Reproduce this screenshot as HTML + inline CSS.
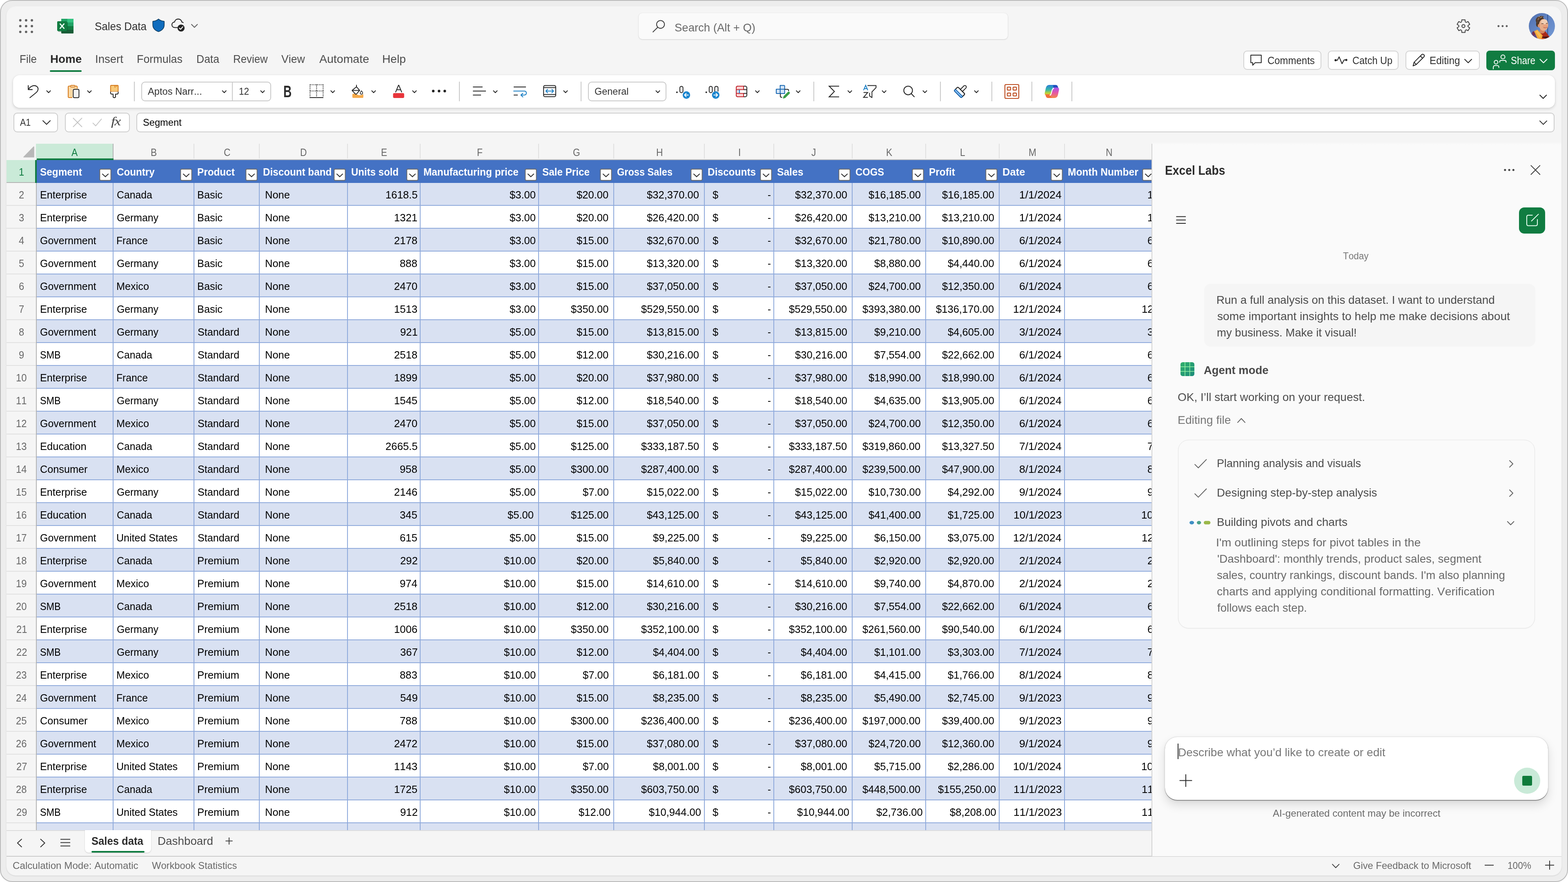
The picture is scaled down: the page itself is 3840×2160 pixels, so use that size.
<!DOCTYPE html>
<html lang="en"><head><meta charset="utf-8"><title>Sales Data - Excel</title>
<style>
html,body{margin:0;padding:0;background:#fff}
body{width:3840px;height:2160px;position:relative;overflow:hidden;font-family:"Liberation Sans",sans-serif;font-kerning:none;font-variant-ligatures:none}
.a{position:absolute}
.t{position:absolute;white-space:nowrap;line-height:1;transform-origin:0 50%}
.fb{width:26px;height:26.2px;background:#fff;border:1.5px solid #6c6c6c;border-radius:3.5px}
svg{overflow:visible}
@media (max-width:1920px) and (min-resolution:1.5dppx){body{zoom:.5}}
@media (max-width:1280px) and (min-resolution:2.5dppx){body{zoom:.333333}}
</style></head><body>
<div class="a" style="left:0px;top:0px;width:3836px;height:2156px;background:#ededed;border:2px solid #bababa;border-radius:30px;"></div>
<div class="a" style="left:16px;top:16px;width:3808px;height:2128px;background:#f5f5f5;border-radius:22px;box-shadow:0 1px 3px rgba(0,0,0,.16),0 0 0 1px rgba(255,255,255,.5);"></div>
<div class="a" style="left:0;top:0;width:3840px;height:2160px;clip-path:inset(16px 16px 16px 16px round 22px);will-change:transform">
<div class="a" style="left:1564px;top:32px;width:904px;height:64px;background:#fafafa;border-radius:9px;box-shadow:0 1px 3px rgba(0,0,0,.14),0 0 2px rgba(0,0,0,.10);"></div>
<svg class="a" style="left:0;top:0;" width="3840" height="2160" viewBox="0 0 3840 2160"><circle cx="49.7" cy="49.7" r="2.95" fill="#616161"/><circle cx="63.9" cy="49.7" r="2.95" fill="#616161"/><circle cx="78.1" cy="49.7" r="2.95" fill="#616161"/><circle cx="49.7" cy="63.9" r="2.95" fill="#616161"/><circle cx="63.9" cy="63.9" r="2.95" fill="#616161"/><circle cx="78.1" cy="63.9" r="2.95" fill="#616161"/><circle cx="49.7" cy="78.1" r="2.95" fill="#616161"/><circle cx="63.9" cy="78.1" r="2.95" fill="#616161"/><circle cx="78.1" cy="78.1" r="2.95" fill="#616161"/><g><rect x="150" y="46" width="30" height="36" rx="2" fill="#185c37"/><rect x="150" y="46" width="30" height="9" fill="#21a366"/><rect x="165" y="46" width="15" height="9" fill="#33c481"/><rect x="150" y="55" width="15" height="9" fill="#107c41"/><rect x="165" y="55" width="15" height="9" fill="#21a366"/><rect x="150" y="64" width="30" height="9" fill="#107c41"/><path d="M150 73 H180 V80 Q180 82 178 82 H152 Q150 82 150 80 Z" fill="#185c37"/><path d="M152 46 H178 Q180 46 180 48 V55 H150 V48 Q150 46 152 46Z" fill="#21a366"/><path d="M165 46 H178 Q180 46 180 48 V55 H165Z" fill="#33c481"/><rect x="142" y="54" width="24" height="24" rx="2" fill="#0b5a2e" opacity=".45"/><rect x="140" y="52" width="24" height="24" rx="2.2" fill="#107c41"/><path d="M146.6 57.6 L157.4 70.4 M157.4 57.6 L146.6 70.4" stroke="#f2fff8" stroke-width="2.7" fill="none"/></g><path d="M388.2 46.6 C392.5 50.2 397.2 51.8 401.6 52 L402.2 52.6 V60.5 C402.2 68.8 397.2 74.6 388.2 77.4 C379.2 74.6 374.2 68.8 374.2 60.5 V52.6 L374.8 52 C379.2 51.8 383.9 50.2 388.2 46.6Z" fill="#0f6cbd" stroke="#0c3b5e" stroke-width="1.6" stroke-linejoin="round"/><path d="M438 67.5 H428.5 C423.8 67.5 421 64.4 421 60.6 C421 57 423.7 54.2 427.4 53.9 C428.3 49.4 432 46.6 436.4 46.6 C441 46.6 444.6 49.6 445.4 54 C446.6 54.2 447.7 54.6 448.6 55.3" fill="none" stroke="#242424" stroke-width="2.1" stroke-linecap="round"/><circle cx="443.4" cy="68.6" r="8.7" fill="#242424"/><polyline points="439.4,68.9 442.3,71.8 447.6,65.6" fill="none" stroke="#fff" stroke-width="2.2" stroke-linecap="round" stroke-linejoin="round"/><polyline points="469,59.8 476.2,67 483.4,59.8" fill="none" stroke="#616161" stroke-width="2.1" stroke-linecap="round" stroke-linejoin="round"/><circle cx="1617.6" cy="59.8" r="9.6" fill="none" stroke="#424242" stroke-width="2.1"/><path d="M1610.8 66.8 L1599.2 78.3" stroke="#424242" stroke-width="2.1" stroke-linecap="round"/><path d="M3579.89 48.41 L3587.91 48.41 L3588.20 52.70 Q3589.00 55.07 3591.45 54.57L3595.31 52.69 L3599.32 59.62 L3595.75 62.02 Q3594.10 63.90 3595.75 65.78L3599.32 68.18 L3595.31 75.11 L3591.45 73.23 Q3589.00 72.73 3588.20 75.10L3587.91 79.39 L3579.89 79.39 L3579.60 75.10 Q3578.80 72.73 3576.35 73.23L3572.49 75.11 L3568.48 68.18 L3572.05 65.78 Q3573.70 63.90 3572.05 62.02L3568.48 59.62 L3572.49 52.69 L3576.35 54.57 Q3578.80 55.07 3579.60 52.70Z" fill="none" stroke="#424242" stroke-width="2" stroke-linejoin="round"/><circle cx="3583.9" cy="63.9" r="3.7" fill="none" stroke="#424242" stroke-width="2.1"/><circle cx="3669.8" cy="64" r="2.45" fill="#5c5c5c"/><circle cx="3679.8" cy="64" r="2.45" fill="#5c5c5c"/><circle cx="3689.9" cy="64" r="2.45" fill="#5c5c5c"/></svg>
<span class="t" style="left:232px;top:50px;font-size:28.5px;color:#303030;transform:scaleX(0.9108);">Sales Data</span>
<span class="t" style="left:1652px;top:54px;font-size:28px;color:#696969;transform:scaleX(0.9824);">Search (Alt + Q)</span>
<svg class="a" style="left:3744px;top:32px" width="64" height="64" viewBox="0 0 64 64"><defs><clipPath id="avc"><circle cx="32" cy="32" r="32"/></clipPath><linearGradient id="avbg" x1="0" y1="0" x2="1" y2="1"><stop offset="0" stop-color="#4f6fae"/><stop offset=".5" stop-color="#6487c6"/><stop offset="1" stop-color="#7399d4"/></linearGradient><filter id="avb" x="-10%" y="-10%" width="120%" height="120%"><feGaussianBlur stdDeviation="0.7"/></filter></defs><g clip-path="url(#avc)"><rect width="64" height="64" fill="url(#avbg)"/><g filter="url(#avb)"><rect x="45.4" y="0" width="1.7" height="60" fill="#2f4f8c"/><path d="M4 52 L13 45 L24 66 L2 66Z" fill="#5b4a8a"/><path d="M8 47 L12 44 L16 52 L11 56Z" fill="#7a2f4a"/><path d="M27 50 L41 45 L52 60 L46 70 L20 70Z" fill="#a9291c"/><path d="M31 58 L47 57 L49 63 L44 68 L28 66Z" fill="#4c1612"/><path d="M30 60 L40 62 L38 66 L26 66Z" fill="#e2541c"/><path d="M13 44.5 L21 40.5 L34 55 L30 67 L23 66Z" fill="#f2a83a"/><path d="M16 45 L21 42.5 L30 54 L27 60Z" fill="#f7bd55"/><ellipse cx="33" cy="44" rx="6.5" ry="6" fill="#d58560"/><ellipse cx="27.5" cy="18" rx="10.5" ry="10" fill="#4b3626"/><ellipse cx="22" cy="27" rx="4.2" ry="7" fill="#4b3626"/><ellipse cx="36.2" cy="29" rx="11.3" ry="14.4" fill="#e6ad8a"/><ellipse cx="38" cy="21.5" rx="8" ry="6" fill="#f1ceb4"/><ellipse cx="40" cy="33" rx="6" ry="5" fill="#e9a07c"/><ellipse cx="24.5" cy="31" rx="2.6" ry="4" fill="#d9936e"/><path d="M20 12 Q28 4 38 9 Q32 10 27 15 Q23 20 23 28 Q17 22 20 12Z" fill="#5a4130"/><path d="M24 10 L27 8 M28 12 L32 9 M22 16 L25 13" stroke="#c9a57c" stroke-width="1.2" fill="none"/><path d="M31 26.4 Q33.5 25 36 26.4" stroke="#5a3a2c" stroke-width="1.3" fill="none"/><path d="M42 25.6 Q44 24.6 46 25.8" stroke="#5a3a2c" stroke-width="1.3" fill="none"/><path d="M36 35.4 Q41 38.6 45.4 34.6 Q41 36.2 36 35.4Z" fill="#fff" stroke="#b5543e" stroke-width=".8"/></g></g></svg>
<span class="t" style="left:48px;top:130px;font-size:28.5px;color:#4c4c4c;transform:scaleX(0.9121);">File</span>
<span class="t" style="left:123px;top:130px;font-size:28.5px;color:#2b2b2b;font-weight:700;transform:scaleX(0.9751);">Home</span>
<span class="t" style="left:233px;top:130px;font-size:28.5px;color:#4c4c4c;transform:scaleX(0.9673);">Insert</span>
<span class="t" style="left:335px;top:130px;font-size:28.5px;color:#4c4c4c;transform:scaleX(0.9428);">Formulas</span>
<span class="t" style="left:481px;top:130px;font-size:28.5px;color:#4c4c4c;transform:scaleX(0.9298);">Data</span>
<span class="t" style="left:571px;top:130px;font-size:28.5px;color:#4c4c4c;transform:scaleX(0.9059);">Review</span>
<span class="t" style="left:689px;top:130px;font-size:28.5px;color:#4c4c4c;transform:scaleX(0.9333);">View</span>
<span class="t" style="left:782px;top:130px;font-size:28.5px;color:#4c4c4c;">Automate</span>
<span class="t" style="left:936px;top:130px;font-size:28.5px;color:#4c4c4c;transform:scaleX(0.9877);">Help</span>
<div class="a" style="left:122px;top:172px;width:78px;height:4px;background:#107c41;border-radius:2px;"></div>
<div class="a" style="left:3044.8px;top:124.4px;width:191px;height:47px;background:#fff;border:2px solid #d3d3d3;border-radius:9px;box-sizing:border-box;"></div>
<div class="a" style="left:3252.4px;top:124.4px;width:172.8px;height:47px;background:#fff;border:2px solid #d3d3d3;border-radius:9px;box-sizing:border-box;"></div>
<div class="a" style="left:3442.4px;top:124.4px;width:181.4px;height:47px;background:#fff;border:2px solid #d3d3d3;border-radius:9px;box-sizing:border-box;"></div>
<div class="a" style="left:3640px;top:124px;width:168px;height:48px;background:#107c41;border-radius:8px;"></div>
<span class="t" style="left:3104px;top:136px;font-size:25px;color:#303030;transform:scaleX(0.9580);">Comments</span>
<span class="t" style="left:3312px;top:136px;font-size:25px;color:#303030;transform:scaleX(0.9422);">Catch Up</span>
<span class="t" style="left:3501px;top:136px;font-size:25px;color:#303030;transform:scaleX(0.9756);">Editing</span>
<span class="t" style="left:3700px;top:136px;font-size:25px;color:#fff;transform:scaleX(0.8997);">Share</span>
<svg class="a" style="left:0;top:0;" width="3840" height="2160" viewBox="0 0 3840 2160"><path d="M3063.2 135 H3088.8 V153.4 H3074 L3067.8 159.8 V153.4 H3063.2 Z" fill="none" stroke="#242424" stroke-width="2" stroke-linejoin="round"/><path d="M3271.6 147.4 H3275.4 L3279.4 139.2 L3286.6 156 L3291.6 146.8 H3296" fill="none" stroke="#242424" stroke-width="2" stroke-linejoin="round" stroke-linecap="round"/><circle cx="3270.8" cy="147.4" r="2.6" fill="#242424"/><circle cx="3297" cy="146.8" r="2.6" fill="#242424"/><path d="M3460.6 161.4 L3463 152.6 L3481.8 133.8 Q3484.4 131.6 3487 134 Q3489.4 136.6 3487.2 139.2 L3468.4 158 Z M3463.4 152.8 L3468.2 157.6 M3478.6 137.2 L3483.6 142.2" fill="none" stroke="#242424" stroke-width="2" stroke-linejoin="round"/><polyline points="3587,145.25 3595.5,153.75 3604,145.25" fill="none" stroke="#242424" stroke-width="2" stroke-linecap="round" stroke-linejoin="round"/><circle cx="3680.6" cy="139.4" r="4.9" fill="none" stroke="#fff" stroke-width="2"/><path d="M3672.8 152.6 V151.4 Q3672.8 148 3676.2 148 H3685 Q3688.4 148 3688.4 151.4 V152.6" fill="none" stroke="#fff" stroke-width="2" stroke-linecap="round"/><circle cx="3663.8" cy="152.2" r="4.5" fill="none" stroke="#fff" stroke-width="2"/><path d="M3657 168.6 Q3656.6 160.4 3660.6 160.4 H3667 Q3671 160.4 3670.6 165.4" fill="none" stroke="#fff" stroke-width="2" stroke-linecap="round"/><polyline points="3771.5,145.25 3780,153.75 3788.5,145.25" fill="none" stroke="#fff" stroke-width="2.2" stroke-linecap="round" stroke-linejoin="round"/></svg>
<div class="a" style="left:32px;top:184px;width:3776px;height:80px;background:#fff;border-radius:16px;box-shadow:0 3px 7px rgba(0,0,0,.14),0 0 2px rgba(0,0,0,.12);"></div>
<div class="a" style="left:346px;top:200px;width:318px;height:48px;background:#fff;border:2px solid #c9c9c9;border-radius:9px;box-sizing:border-box;"></div>
<div class="a" style="left:568.4px;top:201px;width:2px;height:46px;background:#c9c9c9;"></div>
<div class="a" style="left:1440px;top:200px;width:192px;height:48px;background:#fff;border:2px solid #c9c9c9;border-radius:9px;box-sizing:border-box;"></div>
<div class="a" style="left:328.2px;top:200px;width:2px;height:48px;background:#c8c8c8;"></div>
<div class="a" style="left:1124.2px;top:200px;width:2px;height:48px;background:#c8c8c8;"></div>
<div class="a" style="left:1422.2px;top:200px;width:2px;height:48px;background:#c8c8c8;"></div>
<div class="a" style="left:1992.4px;top:200px;width:2px;height:48px;background:#c8c8c8;"></div>
<div class="a" style="left:2302.2px;top:200px;width:2px;height:48px;background:#c8c8c8;"></div>
<div class="a" style="left:2428.2px;top:200px;width:2px;height:48px;background:#c8c8c8;"></div>
<div class="a" style="left:2526.2px;top:200px;width:2px;height:48px;background:#c8c8c8;"></div>
<div class="a" style="left:2624.2px;top:200px;width:2px;height:48px;background:#c8c8c8;"></div>
<span class="t" style="left:362px;top:212px;font-size:24.5px;color:#303030;transform:scaleX(0.9650);">Aptos Narr...</span>
<span class="t" style="left:585px;top:212px;font-size:24.5px;color:#303030;transform:scaleX(0.9191);">12</span>
<span class="t" style="left:1456px;top:212px;font-size:24.5px;color:#303030;transform:scaleX(0.9574);">General</span>
<span class="t" style="left:694px;top:204px;font-size:40px;color:#2b2b2b;font-weight:700;transform:scaleX(0.7010);">B</span>
<svg class="a" style="left:0;top:0;" width="3840" height="2160" viewBox="0 0 3840 2160"><polyline points="114.5,222.3 119,226.9 123.5,222.3" fill="none" stroke="#2e2e2e" stroke-width="2.15" stroke-linecap="round" stroke-linejoin="round"/><polyline points="214.5,222.3 219,226.9 223.5,222.3" fill="none" stroke="#2e2e2e" stroke-width="2.15" stroke-linecap="round" stroke-linejoin="round"/><polyline points="544.7,222.3 549.2,226.9 553.7,222.3" fill="none" stroke="#2e2e2e" stroke-width="2.15" stroke-linecap="round" stroke-linejoin="round"/><polyline points="638.5,222.3 643,226.9 647.5,222.3" fill="none" stroke="#2e2e2e" stroke-width="2.15" stroke-linecap="round" stroke-linejoin="round"/><polyline points="810.3,222.3 814.8,226.9 819.3,222.3" fill="none" stroke="#2e2e2e" stroke-width="2.15" stroke-linecap="round" stroke-linejoin="round"/><polyline points="910.5,222.3 915,226.9 919.5,222.3" fill="none" stroke="#2e2e2e" stroke-width="2.15" stroke-linecap="round" stroke-linejoin="round"/><polyline points="1010.5,222.3 1015,226.9 1019.5,222.3" fill="none" stroke="#2e2e2e" stroke-width="2.15" stroke-linecap="round" stroke-linejoin="round"/><polyline points="1208.5,222.3 1213,226.9 1217.5,222.3" fill="none" stroke="#2e2e2e" stroke-width="2.15" stroke-linecap="round" stroke-linejoin="round"/><polyline points="1380.5,222.3 1385,226.9 1389.5,222.3" fill="none" stroke="#2e2e2e" stroke-width="2.15" stroke-linecap="round" stroke-linejoin="round"/><polyline points="1606.5,222.3 1611,226.9 1615.5,222.3" fill="none" stroke="#2e2e2e" stroke-width="2.15" stroke-linecap="round" stroke-linejoin="round"/><polyline points="1850.3,222.3 1854.8,226.9 1859.3,222.3" fill="none" stroke="#2e2e2e" stroke-width="2.15" stroke-linecap="round" stroke-linejoin="round"/><polyline points="1950.3,222.3 1954.8,226.9 1959.3,222.3" fill="none" stroke="#2e2e2e" stroke-width="2.15" stroke-linecap="round" stroke-linejoin="round"/><polyline points="2076.7,222.3 2081.2,226.9 2085.7,222.3" fill="none" stroke="#2e2e2e" stroke-width="2.15" stroke-linecap="round" stroke-linejoin="round"/><polyline points="2160.7,222.3 2165.2,226.9 2169.7,222.3" fill="none" stroke="#2e2e2e" stroke-width="2.15" stroke-linecap="round" stroke-linejoin="round"/><polyline points="2260.5,222.3 2265,226.9 2269.5,222.3" fill="none" stroke="#2e2e2e" stroke-width="2.15" stroke-linecap="round" stroke-linejoin="round"/><polyline points="2386.7,222.3 2391.2,226.9 2395.7,222.3" fill="none" stroke="#2e2e2e" stroke-width="2.15" stroke-linecap="round" stroke-linejoin="round"/><polyline points="3771.2,233 3779.2,241 3787.2,233" fill="none" stroke="#242424" stroke-width="2.2" stroke-linecap="round" stroke-linejoin="round"/><path d="M69.2 209.6 V219.4 H79 M69.6 219 C74.6 210.6 84 207.2 90 211.6 C95.2 215.6 93.8 222.6 88 227.2 L73.2 239.2" fill="none" stroke="#242424" stroke-width="2.1" stroke-linecap="round" stroke-linejoin="round"/><path d="M177 239 H169.6 Q167 239 167 236.4 V213.4 Q167 210.8 169.6 210.8 H171.6 M184.6 210.8 H186.6 Q189.2 210.8 189.2 213.4 V217" fill="#fbd9a4" stroke="#d4791c" stroke-width="2"/><path d="M168 212 H188.2 V218 H178 V238 H168Z" fill="#fbd9a4"/><rect x="172.6" y="209" width="11.2" height="4.2" rx="2.1" fill="#fde8c8" stroke="#d4791c" stroke-width="1.8"/><rect x="179.4" y="218.8" width="14" height="20.4" rx="2.6" fill="#f3f3f3" stroke="#242424" stroke-width="2"/><rect x="270.8" y="209" width="18.6" height="15.4" rx="1.4" fill="#f8c978" stroke="#d4791c" stroke-width="2"/><path d="M281.6 209 V214.6 M285.6 209 V212.6" stroke="#d4791c" stroke-width="1.8"/><path d="M270.8 224.4 V227.6 Q270.8 230.6 273.8 230.6 H277 V236.4 Q277 239.2 280 239.2 Q283 239.2 283 236.4 V230.6 H286.4 Q289.4 230.6 289.4 227.6 V224.4" fill="#fff" stroke="#242424" stroke-width="2" stroke-linejoin="round"/><path d="M759 207.5 H791.6 M759 222.7 H791.6 M759.3 207.5 V236.4 M775.3 207.5 V236.4 M791.3 207.5 V236.4" stroke="#242424" stroke-width="2.1" stroke-dasharray="2.1 2.25" fill="none"/><path d="M758 239 H792" stroke="#242424" stroke-width="2"/><path d="M863 230.6 Q868 227.4 874.6 231.4 Q882 235.4 889.8 230.8 V237.2 Q889.8 239.8 887.2 239.8 H865.6 Q863 239.8 863 237.2Z" fill="#f5a94a"/><path d="M873 208.4 V213.4 M873 212.4 L880.8 221.4 L873 230.2 Q871.8 231.2 870.6 230.2 L862.2 221.6 Z M863 221.5 H880" fill="#fff" stroke="#242424" stroke-width="2" stroke-linejoin="round" stroke-linecap="round"/><path d="M885.2 222.6 Q888.2 226.2 888.2 227.8 A3 3 0 0 1 882.2 227.8 Q882.2 226.2 885.2 222.6Z" fill="#fff" stroke="#242424" stroke-width="1.6"/><rect x="962.6" y="228" width="27.2" height="12" rx="3" fill="#e8353b"/><path d="M969 225.4 L975.8 208.8 H976.8 L983.6 225.4 M971.4 219.8 H981.2" fill="none" stroke="#242424" stroke-width="2" stroke-linejoin="round" stroke-linecap="round"/><circle cx="1061" cy="223" r="3.2" fill="#242424"/><circle cx="1075.2" cy="223" r="3.2" fill="#242424"/><circle cx="1089.2" cy="223" r="3.2" fill="#242424"/><path d="M1158.2 213 H1181.8 M1158.2 222.9 H1190 M1158.2 232.8 H1178" stroke="#242424" stroke-width="2" fill="none"/><path d="M1258 213 H1288 M1258 232.8 H1268" stroke="#242424" stroke-width="2" fill="none"/><path d="M1258 222.9 H1283.4 Q1289 222.9 1289 227.8 Q1289 232.8 1283.4 232.8 H1276 M1280.6 228.2 L1275.6 232.8 L1280.6 237.4" stroke="#1b7fc4" stroke-width="2" fill="none" stroke-linecap="round" stroke-linejoin="round"/><rect x="1331.2" y="209.4" width="29.8" height="27.4" rx="3.6" fill="#fff" stroke="#242424" stroke-width="2"/><path d="M1331.2 214.4 H1361 M1331.2 231.6 H1361" stroke="#242424" stroke-width="2"/><path d="M1337 223 H1355.4 M1341 218.8 L1336.8 223 L1341 227.2 M1351.4 218.8 L1355.6 223 L1351.4 227.2" stroke="#1b7fc4" stroke-width="2" fill="none" stroke-linecap="round" stroke-linejoin="round"/><circle cx="1657.8" cy="226" r="2" fill="#242424"/><rect x="1665" y="211.4" width="7.6" height="15.6" rx="3.8" fill="none" stroke="#242424" stroke-width="2"/><circle cx="1681" cy="232.8" r="9.2" fill="#1b86cf"/><path d="M1685.6 232.8 H1676.6 M1680.4 228.8 L1676.4 232.8 L1680.4 236.8" stroke="#fff" stroke-width="2" fill="none" stroke-linecap="round" stroke-linejoin="round"/><circle cx="1729.6" cy="226" r="2" fill="#242424"/><rect x="1736.8" y="211.4" width="7.6" height="15.6" rx="3.8" fill="none" stroke="#242424" stroke-width="2"/><path d="M1750.4 224 V215.2 Q1750.4 211.4 1754.4 211.4 Q1758.4 211.4 1758.4 215.2 V224" fill="none" stroke="#242424" stroke-width="2"/><circle cx="1752.8" cy="232.8" r="9.2" fill="#1b86cf"/><path d="M1748.2 232.8 H1757.2 M1753.4 228.8 L1757.4 232.8 L1753.4 236.8" stroke="#fff" stroke-width="2" fill="none" stroke-linecap="round" stroke-linejoin="round"/><rect x="1803" y="211" width="26" height="26" rx="4" fill="#fff" stroke="#242424" stroke-width="2"/><path d="M1807 211 H1821 V219 H1803 V215 Q1803 211 1807 211Z" fill="#fbd3d3"/><path d="M1803 229 H1821 V237 H1807 Q1803 237 1803 233Z" fill="#fbd3d3"/><rect x="1803.6" y="219.6" width="7" height="8.8" fill="#cfe0f5"/><path d="M1821 211 H1807 Q1803 211 1803 215 V233 Q1803 237 1807 237 H1821 M1803 219.4 H1821 M1803 228.8 H1821 M1821 211 V219.4 M1821 228.8 V237" fill="none" stroke="#c4262e" stroke-width="2"/><path d="M1811 219.6 V228.6" stroke="#1b6ec2" stroke-width="2"/><path d="M1821 219.4 H1829 M1821 228.8 H1829" stroke="#242424" stroke-width="2"/><path d="M1910.6 209.2 H1920 Q1921.6 209.2 1921.6 210.8 V218.6 H1910.6Z M1901 218.6 H1921.6 V229 H1902.6 Q1901 229 1901 227.4Z" fill="#d6e6f7" stroke="#1565b0" stroke-width="2" stroke-linejoin="round"/><path d="M1910.6 218.6 V229 M1910.6 210.8 Q1910.6 209.2 1912.2 209.2" fill="none" stroke="#1565b0" stroke-width="2"/><path d="M1921.6 218.8 H1928.6 Q1931.2 218.8 1931.2 221.4 V223 M1911 229.4 V235.6 Q1911 238.2 1913.6 238.2 H1915.6" fill="none" stroke="#242424" stroke-width="2"/><path d="M1917.2 241.6 L1918.8 235.8 L1929.6 225 Q1931.6 223.4 1933.6 225.4 Q1935.4 227.4 1933.8 229.2 L1923 240 Z" fill="#3a9d47"/><path d="M2055 211 H2030.6 L2043.4 224 L2030.6 237.2 H2055" fill="none" stroke="#242424" stroke-width="2.1" stroke-linejoin="miter"/><path d="M2114.8 221 L2120 208.8 L2125.2 221 M2116.6 217 H2123.4" fill="none" stroke="#1b7fc4" stroke-width="2"/><path d="M2114.8 226.6 H2125 L2114.8 238.6 H2125.4" fill="none" stroke="#242424" stroke-width="2" stroke-linejoin="miter"/><path d="M2124.4 209.4 H2145.4 V214.6 L2135.4 225 V239 L2129.6 235.2 V227.4" fill="none" stroke="#242424" stroke-width="2" stroke-linejoin="round"/><circle cx="2224" cy="221.6" r="10.6" fill="none" stroke="#242424" stroke-width="2.1"/><path d="M2231.6 229.2 L2239 237" stroke="#242424" stroke-width="2.1" stroke-linecap="round"/><g transform="translate(2351.6 224.4) rotate(45)"><rect x="-3.6" y="-19.6" width="7.2" height="18" rx="3.6" fill="#fff" stroke="#242424" stroke-width="2"/><rect x="-12.4" y="-4" width="24.8" height="13" rx="2.6" fill="#fff" stroke="#242424" stroke-width="2"/><path d="M-12.4 4.2 H12.4 V6.4 Q12.4 9 9.8 9 H-9.8 Q-12.4 9 -12.4 6.4Z" fill="#8cc1f5" stroke="#1565b0" stroke-width="2" stroke-linejoin="round"/><path d="M-12.4 4.2 V-1.4 Q-12.4 -4 -9.8 -4 H9.8 Q12.4 -4 12.4 -1.4 V4.2" fill="none" stroke="#242424" stroke-width="2"/></g><rect x="2461" y="207" width="34" height="34" rx="2.6" fill="none" stroke="#bc4b1e" stroke-width="2.2"/><rect x="2466.8" y="213.4" width="8.2" height="7.2" rx="1.4" fill="none" stroke="#bc4b1e" stroke-width="2.2"/><rect x="2466.8" y="227.8" width="8.2" height="7.2" rx="1.4" fill="none" stroke="#bc4b1e" stroke-width="2.2"/><rect x="2481" y="213.4" width="8.2" height="7.2" rx="1.4" fill="none" stroke="#bc4b1e" stroke-width="2.2"/><rect x="2481" y="227.8" width="8.2" height="7.2" rx="1.4" fill="none" stroke="#bc4b1e" stroke-width="2.2"/><defs><linearGradient id="cpa" x1="0" y1="0" x2="0" y2="1"><stop offset="0" stop-color="#2a7ed8"/><stop offset=".45" stop-color="#37b7a8"/><stop offset=".75" stop-color="#b6d23c"/><stop offset="1" stop-color="#f3b72f"/></linearGradient><linearGradient id="cpb" x1="0" y1="0" x2="0" y2="1"><stop offset="0" stop-color="#a855f0"/><stop offset=".5" stop-color="#e456a6"/><stop offset="1" stop-color="#f58a4a"/></linearGradient><linearGradient id="cpc" x1="0" y1="0" x2="1" y2="1"><stop offset="0" stop-color="#1b5fd0"/><stop offset="1" stop-color="#2a44a8"/></linearGradient></defs><path d="M2571 208 H2585 Q2589.6 208 2590.8 212.4 L2592.4 218 H2580.4 L2578.4 211.4 Q2577.4 208 2571 208Z" fill="url(#cpc)"/><path d="M2569.8 208 H2576 Q2580.4 208 2579.2 212.6 L2574.6 229.6 Q2573.4 234 2569 234 H2563.6 Q2557.6 234 2558.6 227.6 L2561.2 215.6 Q2562.8 208 2569.8 208Z" fill="url(#cpa)"/><path d="M2583 214.2 H2588.6 Q2594.6 214.2 2593.4 220.6 L2590.8 232.6 Q2589.2 240 2582.2 240 H2576 Q2571.6 240 2572.8 235.6 L2577.4 218.6 Q2578.6 214.2 2583 214.2Z" fill="url(#cpb)"/><path d="M2581 240 H2567 Q2562.4 240 2561.2 235.6 L2560 231 H2572 L2573.6 236.6 Q2574.6 240 2581 240Z" fill="#f0703a"/><path d="M2580.4 216.4 Q2577.6 217.4 2576.6 221 L2574.2 229.8 Q2573.4 232.2 2571.4 233" fill="none" stroke="#fff" stroke-width="2.2" stroke-linecap="round"/></svg>
<div class="a" style="left:32.5px;top:276px;width:109px;height:48px;background:#fff;border:2px solid #cdcdcd;border-radius:9px;box-sizing:border-box;"></div>
<div class="a" style="left:158.8px;top:276px;width:158.8px;height:48px;background:#fff;border:2px solid #cdcdcd;border-radius:9px;box-sizing:border-box;"></div>
<div class="a" style="left:334.4px;top:276px;width:3473px;height:48px;background:#fff;border:2px solid #cdcdcd;border-radius:9px;box-sizing:border-box;"></div>
<span class="t" style="left:49px;top:288px;font-size:24.5px;color:#303030;transform:scaleX(0.8773);">A1</span>
<span class="t" style="left:350px;top:288px;font-size:24.5px;color:#000;transform:scaleX(0.9652);">Segment</span>
<svg class="a" style="left:0;top:0;" width="3840" height="2160" viewBox="0 0 3840 2160"><polyline points="105,295.5 114,304.5 123,295.5" fill="none" stroke="#242424" stroke-width="2" stroke-linecap="round" stroke-linejoin="round"/><polyline points="3771,296.15 3779.5,304.65 3788,296.15" fill="none" stroke="#242424" stroke-width="2" stroke-linecap="round" stroke-linejoin="round"/><path d="M179.4 289.4 L200.4 310.4 M200.4 289.4 L179.4 310.4" stroke="#c0c0c0" stroke-width="2" stroke-linecap="round"/><polyline points="227.6,301.4 234.4,308.2 248.4,291.6" fill="none" stroke="#c6c6c6" stroke-width="2" stroke-linecap="round" stroke-linejoin="round"/></svg>
<span class="t" style="left:271.6px;top:283.4px;font-size:29.5px;font-family:'Liberation Serif',serif;font-style:italic;color:#424242;letter-spacing:-1.5px;transform:scaleX(1.22)">fx</span>
<div class="a" style="left:0;top:0;width:3840px;height:2160px;clip-path:inset(350px 1020px 127px 16px)">
<div class="a" style="left:88px;top:392px;width:2732px;height:1700px;background:#fff;"></div>
<div class="a" style="left:16px;top:350px;width:2804px;height:42px;background:#f5f5f5;"></div>
<div class="a" style="left:16px;top:392px;width:72px;height:1700px;background:#f5f5f5;"></div>
<div class="a" style="left:88px;top:390px;width:2732px;height:2px;background:#c0c0c0;"></div>
<div class="a" style="left:88px;top:352px;width:190px;height:36px;background:#caead8;"></div>
<div class="a" style="left:276px;top:352px;width:2px;height:36px;background:#b3b3b3;"></div>
<div class="a" style="left:90px;top:388px;width:188px;height:4px;background:#107c41;"></div>
<span class="t" style="left:175px;top:361px;font-size:25.3px;color:#107c41;transform:scaleX(0.9000);">A</span>
<div class="a" style="left:474px;top:352px;width:2px;height:36px;background:#e0e0e0;"></div>
<span class="t" style="left:369px;top:361px;font-size:25.3px;color:#696969;transform:scaleX(0.9000);">B</span>
<div class="a" style="left:634px;top:352px;width:2px;height:36px;background:#e0e0e0;"></div>
<span class="t" style="left:548px;top:361px;font-size:25.3px;color:#696969;transform:scaleX(0.9000);">C</span>
<div class="a" style="left:850px;top:352px;width:2px;height:36px;background:#e0e0e0;"></div>
<span class="t" style="left:735px;top:361px;font-size:25.3px;color:#696969;transform:scaleX(0.9000);">D</span>
<div class="a" style="left:1028px;top:352px;width:2px;height:36px;background:#e0e0e0;"></div>
<span class="t" style="left:933px;top:361px;font-size:25.3px;color:#696969;transform:scaleX(0.9000);">E</span>
<div class="a" style="left:1318px;top:352px;width:2px;height:36px;background:#e0e0e0;"></div>
<span class="t" style="left:1168px;top:361px;font-size:25.3px;color:#696969;transform:scaleX(0.9000);">F</span>
<div class="a" style="left:1502px;top:352px;width:2px;height:36px;background:#e0e0e0;"></div>
<span class="t" style="left:1403px;top:361px;font-size:25.3px;color:#696969;transform:scaleX(0.9000);">G</span>
<div class="a" style="left:1724px;top:352px;width:2px;height:36px;background:#e0e0e0;"></div>
<span class="t" style="left:1607px;top:361px;font-size:25.3px;color:#696969;transform:scaleX(0.9000);">H</span>
<div class="a" style="left:1894px;top:352px;width:2px;height:36px;background:#e0e0e0;"></div>
<span class="t" style="left:1808px;top:361px;font-size:25.3px;color:#696969;transform:scaleX(0.9000);">I</span>
<div class="a" style="left:2086px;top:352px;width:2px;height:36px;background:#e0e0e0;"></div>
<span class="t" style="left:1987px;top:361px;font-size:25.3px;color:#696969;transform:scaleX(0.9000);">J</span>
<div class="a" style="left:2266px;top:352px;width:2px;height:36px;background:#e0e0e0;"></div>
<span class="t" style="left:2170px;top:361px;font-size:25.3px;color:#696969;transform:scaleX(0.9000);">K</span>
<div class="a" style="left:2446px;top:352px;width:2px;height:36px;background:#e0e0e0;"></div>
<span class="t" style="left:2351px;top:361px;font-size:25.3px;color:#696969;transform:scaleX(0.9000);">L</span>
<div class="a" style="left:2606px;top:352px;width:2px;height:36px;background:#e0e0e0;"></div>
<span class="t" style="left:2519px;top:361px;font-size:25.3px;color:#696969;transform:scaleX(0.9000);">M</span>
<span class="t" style="left:2708px;top:361px;font-size:25.3px;color:#696969;transform:scaleX(0.9000);">N</span>
<svg class="a" style="left:54px;top:356px" width="32" height="32" viewBox="54 356 32 32"><path d="M83.8 360.5 V385.6 H58.6 Q56 385.6 58 383.4 L81.6 359.2 Q83.8 357.2 83.8 360.5 Z" fill="#b8b8b8"/></svg>
<div class="a" style="left:16px;top:392px;width:72px;height:56px;background:#caead8;"></div>
<div class="a" style="left:16px;top:446px;width:70px;height:2px;background:#b3b3b3;"></div>
<div class="a" style="left:86px;top:392px;width:4px;height:56px;background:#107c41;"></div>
<div class="a" style="left:88px;top:448px;width:2px;height:1700px;background:#b3b3b3;"></div>
<span class="t" style="left:46px;top:409px;font-size:25.6px;color:#107c41;transform:scaleX(0.9300);">1</span>
<div class="a" style="left:16px;top:502px;width:72px;height:2px;background:#e1e1e1;"></div>
<span class="t" style="left:46px;top:465px;font-size:25.6px;color:#696969;transform:scaleX(0.9300);">2</span>
<div class="a" style="left:16px;top:558px;width:72px;height:2px;background:#e1e1e1;"></div>
<span class="t" style="left:46px;top:521px;font-size:25.6px;color:#696969;transform:scaleX(0.9300);">3</span>
<div class="a" style="left:16px;top:614px;width:72px;height:2px;background:#e1e1e1;"></div>
<span class="t" style="left:46px;top:577px;font-size:25.6px;color:#696969;transform:scaleX(0.9300);">4</span>
<div class="a" style="left:16px;top:670px;width:72px;height:2px;background:#e1e1e1;"></div>
<span class="t" style="left:46px;top:633px;font-size:25.6px;color:#696969;transform:scaleX(0.9300);">5</span>
<div class="a" style="left:16px;top:726px;width:72px;height:2px;background:#e1e1e1;"></div>
<span class="t" style="left:46px;top:689px;font-size:25.6px;color:#696969;transform:scaleX(0.9300);">6</span>
<div class="a" style="left:16px;top:782px;width:72px;height:2px;background:#e1e1e1;"></div>
<span class="t" style="left:46px;top:745px;font-size:25.6px;color:#696969;transform:scaleX(0.9300);">7</span>
<div class="a" style="left:16px;top:838px;width:72px;height:2px;background:#e1e1e1;"></div>
<span class="t" style="left:46px;top:801px;font-size:25.6px;color:#696969;transform:scaleX(0.9300);">8</span>
<div class="a" style="left:16px;top:894px;width:72px;height:2px;background:#e1e1e1;"></div>
<span class="t" style="left:46px;top:857px;font-size:25.6px;color:#696969;transform:scaleX(0.9300);">9</span>
<div class="a" style="left:16px;top:950px;width:72px;height:2px;background:#e1e1e1;"></div>
<span class="t" style="left:39px;top:913px;font-size:25.6px;color:#696969;transform:scaleX(0.9300);">10</span>
<div class="a" style="left:16px;top:1006px;width:72px;height:2px;background:#e1e1e1;"></div>
<span class="t" style="left:39px;top:969px;font-size:25.6px;color:#696969;transform:scaleX(0.9300);">11</span>
<div class="a" style="left:16px;top:1062px;width:72px;height:2px;background:#e1e1e1;"></div>
<span class="t" style="left:39px;top:1025px;font-size:25.6px;color:#696969;transform:scaleX(0.9300);">12</span>
<div class="a" style="left:16px;top:1118px;width:72px;height:2px;background:#e1e1e1;"></div>
<span class="t" style="left:39px;top:1081px;font-size:25.6px;color:#696969;transform:scaleX(0.9300);">13</span>
<div class="a" style="left:16px;top:1174px;width:72px;height:2px;background:#e1e1e1;"></div>
<span class="t" style="left:39px;top:1137px;font-size:25.6px;color:#696969;transform:scaleX(0.9300);">14</span>
<div class="a" style="left:16px;top:1230px;width:72px;height:2px;background:#e1e1e1;"></div>
<span class="t" style="left:39px;top:1193px;font-size:25.6px;color:#696969;transform:scaleX(0.9300);">15</span>
<div class="a" style="left:16px;top:1286px;width:72px;height:2px;background:#e1e1e1;"></div>
<span class="t" style="left:39px;top:1249px;font-size:25.6px;color:#696969;transform:scaleX(0.9300);">16</span>
<div class="a" style="left:16px;top:1342px;width:72px;height:2px;background:#e1e1e1;"></div>
<span class="t" style="left:39px;top:1305px;font-size:25.6px;color:#696969;transform:scaleX(0.9300);">17</span>
<div class="a" style="left:16px;top:1398px;width:72px;height:2px;background:#e1e1e1;"></div>
<span class="t" style="left:39px;top:1361px;font-size:25.6px;color:#696969;transform:scaleX(0.9300);">18</span>
<div class="a" style="left:16px;top:1454px;width:72px;height:2px;background:#e1e1e1;"></div>
<span class="t" style="left:39px;top:1417px;font-size:25.6px;color:#696969;transform:scaleX(0.9300);">19</span>
<div class="a" style="left:16px;top:1510px;width:72px;height:2px;background:#e1e1e1;"></div>
<span class="t" style="left:39px;top:1473px;font-size:25.6px;color:#696969;transform:scaleX(0.9300);">20</span>
<div class="a" style="left:16px;top:1566px;width:72px;height:2px;background:#e1e1e1;"></div>
<span class="t" style="left:40px;top:1529px;font-size:25.6px;color:#696969;transform:scaleX(0.9300);">21</span>
<div class="a" style="left:16px;top:1622px;width:72px;height:2px;background:#e1e1e1;"></div>
<span class="t" style="left:40px;top:1585px;font-size:25.6px;color:#696969;transform:scaleX(0.9300);">22</span>
<div class="a" style="left:16px;top:1678px;width:72px;height:2px;background:#e1e1e1;"></div>
<span class="t" style="left:39px;top:1641px;font-size:25.6px;color:#696969;transform:scaleX(0.9300);">23</span>
<div class="a" style="left:16px;top:1734px;width:72px;height:2px;background:#e1e1e1;"></div>
<span class="t" style="left:39px;top:1697px;font-size:25.6px;color:#696969;transform:scaleX(0.9300);">24</span>
<div class="a" style="left:16px;top:1790px;width:72px;height:2px;background:#e1e1e1;"></div>
<span class="t" style="left:39px;top:1753px;font-size:25.6px;color:#696969;transform:scaleX(0.9300);">25</span>
<div class="a" style="left:16px;top:1846px;width:72px;height:2px;background:#e1e1e1;"></div>
<span class="t" style="left:39px;top:1809px;font-size:25.6px;color:#696969;transform:scaleX(0.9300);">26</span>
<div class="a" style="left:16px;top:1902px;width:72px;height:2px;background:#e1e1e1;"></div>
<span class="t" style="left:40px;top:1865px;font-size:25.6px;color:#696969;transform:scaleX(0.9300);">27</span>
<div class="a" style="left:16px;top:1958px;width:72px;height:2px;background:#e1e1e1;"></div>
<span class="t" style="left:39px;top:1921px;font-size:25.6px;color:#696969;transform:scaleX(0.9300);">28</span>
<div class="a" style="left:16px;top:2014px;width:72px;height:2px;background:#e1e1e1;"></div>
<span class="t" style="left:40px;top:1977px;font-size:25.6px;color:#696969;transform:scaleX(0.9300);">29</span>
<div class="a" style="left:16px;top:2070px;width:72px;height:2px;background:#e1e1e1;"></div>
<div class="a" style="left:90px;top:392px;width:2730px;height:56px;background:#4472c4;"></div>
<span class="t" style="left:98px;top:408px;font-size:26px;color:#fff;font-weight:700;transform:scaleX(0.9362);">Segment</span>
<span class="t" style="left:286px;top:408px;font-size:26px;color:#fff;font-weight:700;transform:scaleX(0.9294);">Country</span>
<span class="t" style="left:483px;top:408px;font-size:26px;color:#fff;font-weight:700;transform:scaleX(0.9348);">Product</span>
<span class="t" style="left:644px;top:408px;font-size:26px;color:#fff;font-weight:700;transform:scaleX(0.9317);">Discount band</span>
<span class="t" style="left:860px;top:408px;font-size:26px;color:#fff;font-weight:700;transform:scaleX(0.9249);">Units sold</span>
<span class="t" style="left:1037px;top:408px;font-size:26px;color:#fff;font-weight:700;transform:scaleX(0.9372);">Manufacturing price</span>
<span class="t" style="left:1328px;top:408px;font-size:26px;color:#fff;font-weight:700;transform:scaleX(0.9334);">Sale Price</span>
<span class="t" style="left:1511px;top:408px;font-size:26px;color:#fff;font-weight:700;transform:scaleX(0.9050);">Gross Sales</span>
<span class="t" style="left:1733px;top:408px;font-size:26px;color:#fff;font-weight:700;transform:scaleX(0.9400);">Discounts</span>
<span class="t" style="left:1903px;top:408px;font-size:26px;color:#fff;font-weight:700;transform:scaleX(0.9466);">Sales</span>
<span class="t" style="left:2095px;top:408px;font-size:26px;color:#fff;font-weight:700;transform:scaleX(0.9156);">COGS</span>
<span class="t" style="left:2275px;top:408px;font-size:26px;color:#fff;font-weight:700;transform:scaleX(0.9404);">Profit</span>
<span class="t" style="left:2455px;top:408px;font-size:26px;color:#fff;font-weight:700;transform:scaleX(0.9846);">Date</span>
<span class="t" style="left:2615px;top:408px;font-size:26px;color:#fff;font-weight:700;transform:scaleX(0.9416);">Month Number</span>
<svg class="a" style="left:0;top:0" width="3840" height="2160" viewBox="0 0 3840 2160"><rect x="244.35" y="414.2" width="27.2" height="27.5" rx="2.6" fill="#fff" stroke="#6a6a6a" stroke-width="1.9"/><polyline points="251,426.2 258,432.8 265,426.2" fill="none" stroke="#333" stroke-width="2.2" stroke-linecap="round" stroke-linejoin="miter"/><rect x="442.35" y="414.2" width="27.2" height="27.5" rx="2.6" fill="#fff" stroke="#6a6a6a" stroke-width="1.9"/><polyline points="449,426.2 456,432.8 463,426.2" fill="none" stroke="#333" stroke-width="2.2" stroke-linecap="round" stroke-linejoin="miter"/><rect x="602.35" y="414.2" width="27.2" height="27.5" rx="2.6" fill="#fff" stroke="#6a6a6a" stroke-width="1.9"/><polyline points="609,426.2 616,432.8 623,426.2" fill="none" stroke="#333" stroke-width="2.2" stroke-linecap="round" stroke-linejoin="miter"/><rect x="818.35" y="414.2" width="27.2" height="27.5" rx="2.6" fill="#fff" stroke="#6a6a6a" stroke-width="1.9"/><polyline points="825,426.2 832,432.8 839,426.2" fill="none" stroke="#333" stroke-width="2.2" stroke-linecap="round" stroke-linejoin="miter"/><rect x="996.35" y="414.2" width="27.2" height="27.5" rx="2.6" fill="#fff" stroke="#6a6a6a" stroke-width="1.9"/><polyline points="1003,426.2 1010,432.8 1017,426.2" fill="none" stroke="#333" stroke-width="2.2" stroke-linecap="round" stroke-linejoin="miter"/><rect x="1286.35" y="414.2" width="27.2" height="27.5" rx="2.6" fill="#fff" stroke="#6a6a6a" stroke-width="1.9"/><polyline points="1293,426.2 1300,432.8 1307,426.2" fill="none" stroke="#333" stroke-width="2.2" stroke-linecap="round" stroke-linejoin="miter"/><rect x="1470.35" y="414.2" width="27.2" height="27.5" rx="2.6" fill="#fff" stroke="#6a6a6a" stroke-width="1.9"/><polyline points="1477,426.2 1484,432.8 1491,426.2" fill="none" stroke="#333" stroke-width="2.2" stroke-linecap="round" stroke-linejoin="miter"/><rect x="1692.35" y="414.2" width="27.2" height="27.5" rx="2.6" fill="#fff" stroke="#6a6a6a" stroke-width="1.9"/><polyline points="1699,426.2 1706,432.8 1713,426.2" fill="none" stroke="#333" stroke-width="2.2" stroke-linecap="round" stroke-linejoin="miter"/><rect x="1862.35" y="414.2" width="27.2" height="27.5" rx="2.6" fill="#fff" stroke="#6a6a6a" stroke-width="1.9"/><polyline points="1869,426.2 1876,432.8 1883,426.2" fill="none" stroke="#333" stroke-width="2.2" stroke-linecap="round" stroke-linejoin="miter"/><rect x="2054.35" y="414.2" width="27.2" height="27.5" rx="2.6" fill="#fff" stroke="#6a6a6a" stroke-width="1.9"/><polyline points="2061,426.2 2068,432.8 2075,426.2" fill="none" stroke="#333" stroke-width="2.2" stroke-linecap="round" stroke-linejoin="miter"/><rect x="2234.35" y="414.2" width="27.2" height="27.5" rx="2.6" fill="#fff" stroke="#6a6a6a" stroke-width="1.9"/><polyline points="2241,426.2 2248,432.8 2255,426.2" fill="none" stroke="#333" stroke-width="2.2" stroke-linecap="round" stroke-linejoin="miter"/><rect x="2414.35" y="414.2" width="27.2" height="27.5" rx="2.6" fill="#fff" stroke="#6a6a6a" stroke-width="1.9"/><polyline points="2421,426.2 2428,432.8 2435,426.2" fill="none" stroke="#333" stroke-width="2.2" stroke-linecap="round" stroke-linejoin="miter"/><rect x="2574.35" y="414.2" width="27.2" height="27.5" rx="2.6" fill="#fff" stroke="#6a6a6a" stroke-width="1.9"/><polyline points="2581,426.2 2588,432.8 2595,426.2" fill="none" stroke="#333" stroke-width="2.2" stroke-linecap="round" stroke-linejoin="miter"/><rect x="2798.35" y="414.2" width="27.2" height="27.5" rx="2.6" fill="#fff" stroke="#6a6a6a" stroke-width="1.9"/><polyline points="2805,426.2 2812,432.8 2819,426.2" fill="none" stroke="#333" stroke-width="2.2" stroke-linecap="round" stroke-linejoin="miter"/></svg>
<div class="a" style="left:90px;top:448px;width:2730px;height:56px;background:#d9e1f2;"></div>
<div class="a" style="left:90px;top:502px;width:2730px;height:2px;background:#8ea9db;"></div>
<div class="a" style="left:90px;top:558px;width:2730px;height:2px;background:#8ea9db;"></div>
<div class="a" style="left:90px;top:560px;width:2730px;height:56px;background:#d9e1f2;"></div>
<div class="a" style="left:90px;top:614px;width:2730px;height:2px;background:#8ea9db;"></div>
<div class="a" style="left:90px;top:670px;width:2730px;height:2px;background:#8ea9db;"></div>
<div class="a" style="left:90px;top:672px;width:2730px;height:56px;background:#d9e1f2;"></div>
<div class="a" style="left:90px;top:726px;width:2730px;height:2px;background:#8ea9db;"></div>
<div class="a" style="left:90px;top:782px;width:2730px;height:2px;background:#8ea9db;"></div>
<div class="a" style="left:90px;top:784px;width:2730px;height:56px;background:#d9e1f2;"></div>
<div class="a" style="left:90px;top:838px;width:2730px;height:2px;background:#8ea9db;"></div>
<div class="a" style="left:90px;top:894px;width:2730px;height:2px;background:#8ea9db;"></div>
<div class="a" style="left:90px;top:896px;width:2730px;height:56px;background:#d9e1f2;"></div>
<div class="a" style="left:90px;top:950px;width:2730px;height:2px;background:#8ea9db;"></div>
<div class="a" style="left:90px;top:1006px;width:2730px;height:2px;background:#8ea9db;"></div>
<div class="a" style="left:90px;top:1008px;width:2730px;height:56px;background:#d9e1f2;"></div>
<div class="a" style="left:90px;top:1062px;width:2730px;height:2px;background:#8ea9db;"></div>
<div class="a" style="left:90px;top:1118px;width:2730px;height:2px;background:#8ea9db;"></div>
<div class="a" style="left:90px;top:1120px;width:2730px;height:56px;background:#d9e1f2;"></div>
<div class="a" style="left:90px;top:1174px;width:2730px;height:2px;background:#8ea9db;"></div>
<div class="a" style="left:90px;top:1230px;width:2730px;height:2px;background:#8ea9db;"></div>
<div class="a" style="left:90px;top:1232px;width:2730px;height:56px;background:#d9e1f2;"></div>
<div class="a" style="left:90px;top:1286px;width:2730px;height:2px;background:#8ea9db;"></div>
<div class="a" style="left:90px;top:1342px;width:2730px;height:2px;background:#8ea9db;"></div>
<div class="a" style="left:90px;top:1344px;width:2730px;height:56px;background:#d9e1f2;"></div>
<div class="a" style="left:90px;top:1398px;width:2730px;height:2px;background:#8ea9db;"></div>
<div class="a" style="left:90px;top:1454px;width:2730px;height:2px;background:#8ea9db;"></div>
<div class="a" style="left:90px;top:1456px;width:2730px;height:56px;background:#d9e1f2;"></div>
<div class="a" style="left:90px;top:1510px;width:2730px;height:2px;background:#8ea9db;"></div>
<div class="a" style="left:90px;top:1566px;width:2730px;height:2px;background:#8ea9db;"></div>
<div class="a" style="left:90px;top:1568px;width:2730px;height:56px;background:#d9e1f2;"></div>
<div class="a" style="left:90px;top:1622px;width:2730px;height:2px;background:#8ea9db;"></div>
<div class="a" style="left:90px;top:1678px;width:2730px;height:2px;background:#8ea9db;"></div>
<div class="a" style="left:90px;top:1680px;width:2730px;height:56px;background:#d9e1f2;"></div>
<div class="a" style="left:90px;top:1734px;width:2730px;height:2px;background:#8ea9db;"></div>
<div class="a" style="left:90px;top:1790px;width:2730px;height:2px;background:#8ea9db;"></div>
<div class="a" style="left:90px;top:1792px;width:2730px;height:56px;background:#d9e1f2;"></div>
<div class="a" style="left:90px;top:1846px;width:2730px;height:2px;background:#8ea9db;"></div>
<div class="a" style="left:90px;top:1902px;width:2730px;height:2px;background:#8ea9db;"></div>
<div class="a" style="left:90px;top:1904px;width:2730px;height:56px;background:#d9e1f2;"></div>
<div class="a" style="left:90px;top:1958px;width:2730px;height:2px;background:#8ea9db;"></div>
<div class="a" style="left:90px;top:2014px;width:2730px;height:2px;background:#8ea9db;"></div>
<div class="a" style="left:90px;top:2016px;width:2730px;height:56px;background:#d9e1f2;"></div>
<div class="a" style="left:90px;top:2070px;width:2730px;height:2px;background:#8ea9db;"></div>
<div class="a" style="left:276px;top:448px;width:2px;height:1700px;background:#8ea9db;"></div>
<div class="a" style="left:474px;top:448px;width:2px;height:1700px;background:#8ea9db;"></div>
<div class="a" style="left:634px;top:448px;width:2px;height:1700px;background:#8ea9db;"></div>
<div class="a" style="left:850px;top:448px;width:2px;height:1700px;background:#8ea9db;"></div>
<div class="a" style="left:1028px;top:448px;width:2px;height:1700px;background:#8ea9db;"></div>
<div class="a" style="left:1318px;top:448px;width:2px;height:1700px;background:#8ea9db;"></div>
<div class="a" style="left:1502px;top:448px;width:2px;height:1700px;background:#8ea9db;"></div>
<div class="a" style="left:1724px;top:448px;width:2px;height:1700px;background:#8ea9db;"></div>
<div class="a" style="left:1894px;top:448px;width:2px;height:1700px;background:#8ea9db;"></div>
<div class="a" style="left:2086px;top:448px;width:2px;height:1700px;background:#8ea9db;"></div>
<div class="a" style="left:2266px;top:448px;width:2px;height:1700px;background:#8ea9db;"></div>
<div class="a" style="left:2446px;top:448px;width:2px;height:1700px;background:#8ea9db;"></div>
<div class="a" style="left:2606px;top:448px;width:2px;height:1700px;background:#8ea9db;"></div>
<span class="t" style="left:98px;top:464px;font-size:26px;color:#000;transform:scaleX(0.9704);">Enterprise</span>
<span class="t" style="left:286px;top:464px;font-size:26px;color:#000;transform:scaleX(0.9526);">Canada</span>
<span class="t" style="left:483px;top:464px;font-size:26px;color:#000;transform:scaleX(0.9743);">Basic</span>
<span class="t" style="left:649px;top:464px;font-size:26px;color:#000;transform:scaleX(0.9802);">None</span>
<span class="t" style="left:944px;top:464px;font-size:26px;color:#000;transform:scaleX(0.9900);">1618.5</span>
<span class="t" style="left:1248px;top:464px;font-size:26px;color:#000;transform:scaleX(0.9830);">$3.00</span>
<span class="t" style="left:1412px;top:464px;font-size:26px;color:#000;transform:scaleX(0.9830);">$20.00</span>
<span class="t" style="left:1584px;top:464px;font-size:26px;color:#000;transform:scaleX(0.9830);">$32,370.00</span>
<span class="t" style="left:1745px;top:464px;font-size:26px;color:#000;transform:scaleX(0.9850);">$</span>
<span class="t" style="left:1880px;top:464px;font-size:26px;color:#000;transform:scaleX(0.9137);">-</span>
<span class="t" style="left:1947px;top:464px;font-size:26px;color:#000;transform:scaleX(0.9830);">$32,370.00</span>
<span class="t" style="left:2127px;top:464px;font-size:26px;color:#000;transform:scaleX(0.9830);">$16,185.00</span>
<span class="t" style="left:2307px;top:464px;font-size:26px;color:#000;transform:scaleX(0.9830);">$16,185.00</span>
<span class="t" style="left:2496px;top:464px;font-size:26px;color:#000;transform:scaleX(1.0250);">1/1/2024</span>
<span class="t" style="left:2810px;top:464px;font-size:26px;color:#000;transform:scaleX(0.9900);">1</span>
<span class="t" style="left:98px;top:520px;font-size:26px;color:#000;transform:scaleX(0.9704);">Enterprise</span>
<span class="t" style="left:286px;top:520px;font-size:26px;color:#000;transform:scaleX(0.9530);">Germany</span>
<span class="t" style="left:483px;top:520px;font-size:26px;color:#000;transform:scaleX(0.9743);">Basic</span>
<span class="t" style="left:649px;top:520px;font-size:26px;color:#000;transform:scaleX(0.9802);">None</span>
<span class="t" style="left:965px;top:520px;font-size:26px;color:#000;transform:scaleX(0.9900);">1321</span>
<span class="t" style="left:1248px;top:520px;font-size:26px;color:#000;transform:scaleX(0.9830);">$3.00</span>
<span class="t" style="left:1412px;top:520px;font-size:26px;color:#000;transform:scaleX(0.9830);">$20.00</span>
<span class="t" style="left:1584px;top:520px;font-size:26px;color:#000;transform:scaleX(0.9830);">$26,420.00</span>
<span class="t" style="left:1745px;top:520px;font-size:26px;color:#000;transform:scaleX(0.9850);">$</span>
<span class="t" style="left:1880px;top:520px;font-size:26px;color:#000;transform:scaleX(0.9137);">-</span>
<span class="t" style="left:1947px;top:520px;font-size:26px;color:#000;transform:scaleX(0.9830);">$26,420.00</span>
<span class="t" style="left:2127px;top:520px;font-size:26px;color:#000;transform:scaleX(0.9830);">$13,210.00</span>
<span class="t" style="left:2307px;top:520px;font-size:26px;color:#000;transform:scaleX(0.9830);">$13,210.00</span>
<span class="t" style="left:2496px;top:520px;font-size:26px;color:#000;transform:scaleX(1.0250);">1/1/2024</span>
<span class="t" style="left:2810px;top:520px;font-size:26px;color:#000;transform:scaleX(0.9900);">1</span>
<span class="t" style="left:98px;top:576px;font-size:26px;color:#000;transform:scaleX(0.9614);">Government</span>
<span class="t" style="left:285px;top:576px;font-size:26px;color:#000;transform:scaleX(0.9506);">France</span>
<span class="t" style="left:483px;top:576px;font-size:26px;color:#000;transform:scaleX(0.9743);">Basic</span>
<span class="t" style="left:649px;top:576px;font-size:26px;color:#000;transform:scaleX(0.9802);">None</span>
<span class="t" style="left:965px;top:576px;font-size:26px;color:#000;transform:scaleX(0.9900);">2178</span>
<span class="t" style="left:1248px;top:576px;font-size:26px;color:#000;transform:scaleX(0.9830);">$3.00</span>
<span class="t" style="left:1412px;top:576px;font-size:26px;color:#000;transform:scaleX(0.9830);">$15.00</span>
<span class="t" style="left:1584px;top:576px;font-size:26px;color:#000;transform:scaleX(0.9830);">$32,670.00</span>
<span class="t" style="left:1745px;top:576px;font-size:26px;color:#000;transform:scaleX(0.9850);">$</span>
<span class="t" style="left:1880px;top:576px;font-size:26px;color:#000;transform:scaleX(0.9137);">-</span>
<span class="t" style="left:1947px;top:576px;font-size:26px;color:#000;transform:scaleX(0.9830);">$32,670.00</span>
<span class="t" style="left:2127px;top:576px;font-size:26px;color:#000;transform:scaleX(0.9830);">$21,780.00</span>
<span class="t" style="left:2307px;top:576px;font-size:26px;color:#000;transform:scaleX(0.9830);">$10,890.00</span>
<span class="t" style="left:2496px;top:576px;font-size:26px;color:#000;transform:scaleX(1.0250);">6/1/2024</span>
<span class="t" style="left:2810px;top:576px;font-size:26px;color:#000;transform:scaleX(0.9900);">6</span>
<span class="t" style="left:98px;top:632px;font-size:26px;color:#000;transform:scaleX(0.9614);">Government</span>
<span class="t" style="left:286px;top:632px;font-size:26px;color:#000;transform:scaleX(0.9530);">Germany</span>
<span class="t" style="left:483px;top:632px;font-size:26px;color:#000;transform:scaleX(0.9743);">Basic</span>
<span class="t" style="left:649px;top:632px;font-size:26px;color:#000;transform:scaleX(0.9802);">None</span>
<span class="t" style="left:979px;top:632px;font-size:26px;color:#000;transform:scaleX(0.9900);">888</span>
<span class="t" style="left:1248px;top:632px;font-size:26px;color:#000;transform:scaleX(0.9830);">$3.00</span>
<span class="t" style="left:1412px;top:632px;font-size:26px;color:#000;transform:scaleX(0.9830);">$15.00</span>
<span class="t" style="left:1584px;top:632px;font-size:26px;color:#000;transform:scaleX(0.9830);">$13,320.00</span>
<span class="t" style="left:1745px;top:632px;font-size:26px;color:#000;transform:scaleX(0.9850);">$</span>
<span class="t" style="left:1880px;top:632px;font-size:26px;color:#000;transform:scaleX(0.9137);">-</span>
<span class="t" style="left:1947px;top:632px;font-size:26px;color:#000;transform:scaleX(0.9830);">$13,320.00</span>
<span class="t" style="left:2141px;top:632px;font-size:26px;color:#000;transform:scaleX(0.9830);">$8,880.00</span>
<span class="t" style="left:2321px;top:632px;font-size:26px;color:#000;transform:scaleX(0.9830);">$4,440.00</span>
<span class="t" style="left:2496px;top:632px;font-size:26px;color:#000;transform:scaleX(1.0250);">6/1/2024</span>
<span class="t" style="left:2810px;top:632px;font-size:26px;color:#000;transform:scaleX(0.9900);">6</span>
<span class="t" style="left:98px;top:688px;font-size:26px;color:#000;transform:scaleX(0.9614);">Government</span>
<span class="t" style="left:285px;top:688px;font-size:26px;color:#000;transform:scaleX(0.9706);">Mexico</span>
<span class="t" style="left:483px;top:688px;font-size:26px;color:#000;transform:scaleX(0.9743);">Basic</span>
<span class="t" style="left:649px;top:688px;font-size:26px;color:#000;transform:scaleX(0.9802);">None</span>
<span class="t" style="left:965px;top:688px;font-size:26px;color:#000;transform:scaleX(0.9900);">2470</span>
<span class="t" style="left:1248px;top:688px;font-size:26px;color:#000;transform:scaleX(0.9830);">$3.00</span>
<span class="t" style="left:1412px;top:688px;font-size:26px;color:#000;transform:scaleX(0.9830);">$15.00</span>
<span class="t" style="left:1584px;top:688px;font-size:26px;color:#000;transform:scaleX(0.9830);">$37,050.00</span>
<span class="t" style="left:1745px;top:688px;font-size:26px;color:#000;transform:scaleX(0.9850);">$</span>
<span class="t" style="left:1880px;top:688px;font-size:26px;color:#000;transform:scaleX(0.9137);">-</span>
<span class="t" style="left:1947px;top:688px;font-size:26px;color:#000;transform:scaleX(0.9830);">$37,050.00</span>
<span class="t" style="left:2127px;top:688px;font-size:26px;color:#000;transform:scaleX(0.9830);">$24,700.00</span>
<span class="t" style="left:2307px;top:688px;font-size:26px;color:#000;transform:scaleX(0.9830);">$12,350.00</span>
<span class="t" style="left:2496px;top:688px;font-size:26px;color:#000;transform:scaleX(1.0250);">6/1/2024</span>
<span class="t" style="left:2810px;top:688px;font-size:26px;color:#000;transform:scaleX(0.9900);">6</span>
<span class="t" style="left:98px;top:744px;font-size:26px;color:#000;transform:scaleX(0.9704);">Enterprise</span>
<span class="t" style="left:286px;top:744px;font-size:26px;color:#000;transform:scaleX(0.9530);">Germany</span>
<span class="t" style="left:483px;top:744px;font-size:26px;color:#000;transform:scaleX(0.9743);">Basic</span>
<span class="t" style="left:649px;top:744px;font-size:26px;color:#000;transform:scaleX(0.9802);">None</span>
<span class="t" style="left:965px;top:744px;font-size:26px;color:#000;transform:scaleX(0.9900);">1513</span>
<span class="t" style="left:1248px;top:744px;font-size:26px;color:#000;transform:scaleX(0.9830);">$3.00</span>
<span class="t" style="left:1398px;top:744px;font-size:26px;color:#000;transform:scaleX(0.9830);">$350.00</span>
<span class="t" style="left:1570px;top:744px;font-size:26px;color:#000;transform:scaleX(0.9830);">$529,550.00</span>
<span class="t" style="left:1745px;top:744px;font-size:26px;color:#000;transform:scaleX(0.9850);">$</span>
<span class="t" style="left:1880px;top:744px;font-size:26px;color:#000;transform:scaleX(0.9137);">-</span>
<span class="t" style="left:1932px;top:744px;font-size:26px;color:#000;transform:scaleX(0.9830);">$529,550.00</span>
<span class="t" style="left:2112px;top:744px;font-size:26px;color:#000;transform:scaleX(0.9830);">$393,380.00</span>
<span class="t" style="left:2292px;top:744px;font-size:26px;color:#000;transform:scaleX(0.9830);">$136,170.00</span>
<span class="t" style="left:2481px;top:744px;font-size:26px;color:#000;transform:scaleX(1.0250);">12/1/2024</span>
<span class="t" style="left:2796px;top:744px;font-size:26px;color:#000;transform:scaleX(0.9900);">12</span>
<span class="t" style="left:98px;top:800px;font-size:26px;color:#000;transform:scaleX(0.9614);">Government</span>
<span class="t" style="left:286px;top:800px;font-size:26px;color:#000;transform:scaleX(0.9530);">Germany</span>
<span class="t" style="left:484px;top:800px;font-size:26px;color:#000;transform:scaleX(0.9682);">Standard</span>
<span class="t" style="left:649px;top:800px;font-size:26px;color:#000;transform:scaleX(0.9802);">None</span>
<span class="t" style="left:980px;top:800px;font-size:26px;color:#000;transform:scaleX(0.9900);">921</span>
<span class="t" style="left:1248px;top:800px;font-size:26px;color:#000;transform:scaleX(0.9830);">$5.00</span>
<span class="t" style="left:1412px;top:800px;font-size:26px;color:#000;transform:scaleX(0.9830);">$15.00</span>
<span class="t" style="left:1584px;top:800px;font-size:26px;color:#000;transform:scaleX(0.9830);">$13,815.00</span>
<span class="t" style="left:1745px;top:800px;font-size:26px;color:#000;transform:scaleX(0.9850);">$</span>
<span class="t" style="left:1880px;top:800px;font-size:26px;color:#000;transform:scaleX(0.9137);">-</span>
<span class="t" style="left:1947px;top:800px;font-size:26px;color:#000;transform:scaleX(0.9830);">$13,815.00</span>
<span class="t" style="left:2141px;top:800px;font-size:26px;color:#000;transform:scaleX(0.9830);">$9,210.00</span>
<span class="t" style="left:2321px;top:800px;font-size:26px;color:#000;transform:scaleX(0.9830);">$4,605.00</span>
<span class="t" style="left:2496px;top:800px;font-size:26px;color:#000;transform:scaleX(1.0250);">3/1/2024</span>
<span class="t" style="left:2810px;top:800px;font-size:26px;color:#000;transform:scaleX(0.9900);">3</span>
<span class="t" style="left:98px;top:856px;font-size:26px;color:#000;transform:scaleX(0.8998);">SMB</span>
<span class="t" style="left:286px;top:856px;font-size:26px;color:#000;transform:scaleX(0.9526);">Canada</span>
<span class="t" style="left:484px;top:856px;font-size:26px;color:#000;transform:scaleX(0.9682);">Standard</span>
<span class="t" style="left:649px;top:856px;font-size:26px;color:#000;transform:scaleX(0.9802);">None</span>
<span class="t" style="left:965px;top:856px;font-size:26px;color:#000;transform:scaleX(0.9900);">2518</span>
<span class="t" style="left:1248px;top:856px;font-size:26px;color:#000;transform:scaleX(0.9830);">$5.00</span>
<span class="t" style="left:1412px;top:856px;font-size:26px;color:#000;transform:scaleX(0.9830);">$12.00</span>
<span class="t" style="left:1584px;top:856px;font-size:26px;color:#000;transform:scaleX(0.9830);">$30,216.00</span>
<span class="t" style="left:1745px;top:856px;font-size:26px;color:#000;transform:scaleX(0.9850);">$</span>
<span class="t" style="left:1880px;top:856px;font-size:26px;color:#000;transform:scaleX(0.9137);">-</span>
<span class="t" style="left:1947px;top:856px;font-size:26px;color:#000;transform:scaleX(0.9830);">$30,216.00</span>
<span class="t" style="left:2141px;top:856px;font-size:26px;color:#000;transform:scaleX(0.9830);">$7,554.00</span>
<span class="t" style="left:2307px;top:856px;font-size:26px;color:#000;transform:scaleX(0.9830);">$22,662.00</span>
<span class="t" style="left:2496px;top:856px;font-size:26px;color:#000;transform:scaleX(1.0250);">6/1/2024</span>
<span class="t" style="left:2810px;top:856px;font-size:26px;color:#000;transform:scaleX(0.9900);">6</span>
<span class="t" style="left:98px;top:912px;font-size:26px;color:#000;transform:scaleX(0.9704);">Enterprise</span>
<span class="t" style="left:285px;top:912px;font-size:26px;color:#000;transform:scaleX(0.9506);">France</span>
<span class="t" style="left:484px;top:912px;font-size:26px;color:#000;transform:scaleX(0.9682);">Standard</span>
<span class="t" style="left:649px;top:912px;font-size:26px;color:#000;transform:scaleX(0.9802);">None</span>
<span class="t" style="left:965px;top:912px;font-size:26px;color:#000;transform:scaleX(0.9900);">1899</span>
<span class="t" style="left:1248px;top:912px;font-size:26px;color:#000;transform:scaleX(0.9830);">$5.00</span>
<span class="t" style="left:1412px;top:912px;font-size:26px;color:#000;transform:scaleX(0.9830);">$20.00</span>
<span class="t" style="left:1584px;top:912px;font-size:26px;color:#000;transform:scaleX(0.9830);">$37,980.00</span>
<span class="t" style="left:1745px;top:912px;font-size:26px;color:#000;transform:scaleX(0.9850);">$</span>
<span class="t" style="left:1880px;top:912px;font-size:26px;color:#000;transform:scaleX(0.9137);">-</span>
<span class="t" style="left:1947px;top:912px;font-size:26px;color:#000;transform:scaleX(0.9830);">$37,980.00</span>
<span class="t" style="left:2127px;top:912px;font-size:26px;color:#000;transform:scaleX(0.9830);">$18,990.00</span>
<span class="t" style="left:2307px;top:912px;font-size:26px;color:#000;transform:scaleX(0.9830);">$18,990.00</span>
<span class="t" style="left:2496px;top:912px;font-size:26px;color:#000;transform:scaleX(1.0250);">6/1/2024</span>
<span class="t" style="left:2810px;top:912px;font-size:26px;color:#000;transform:scaleX(0.9900);">6</span>
<span class="t" style="left:98px;top:968px;font-size:26px;color:#000;transform:scaleX(0.8998);">SMB</span>
<span class="t" style="left:286px;top:968px;font-size:26px;color:#000;transform:scaleX(0.9530);">Germany</span>
<span class="t" style="left:484px;top:968px;font-size:26px;color:#000;transform:scaleX(0.9682);">Standard</span>
<span class="t" style="left:649px;top:968px;font-size:26px;color:#000;transform:scaleX(0.9802);">None</span>
<span class="t" style="left:965px;top:968px;font-size:26px;color:#000;transform:scaleX(0.9900);">1545</span>
<span class="t" style="left:1248px;top:968px;font-size:26px;color:#000;transform:scaleX(0.9830);">$5.00</span>
<span class="t" style="left:1412px;top:968px;font-size:26px;color:#000;transform:scaleX(0.9830);">$12.00</span>
<span class="t" style="left:1584px;top:968px;font-size:26px;color:#000;transform:scaleX(0.9830);">$18,540.00</span>
<span class="t" style="left:1745px;top:968px;font-size:26px;color:#000;transform:scaleX(0.9850);">$</span>
<span class="t" style="left:1880px;top:968px;font-size:26px;color:#000;transform:scaleX(0.9137);">-</span>
<span class="t" style="left:1947px;top:968px;font-size:26px;color:#000;transform:scaleX(0.9830);">$18,540.00</span>
<span class="t" style="left:2141px;top:968px;font-size:26px;color:#000;transform:scaleX(0.9830);">$4,635.00</span>
<span class="t" style="left:2307px;top:968px;font-size:26px;color:#000;transform:scaleX(0.9830);">$13,905.00</span>
<span class="t" style="left:2496px;top:968px;font-size:26px;color:#000;transform:scaleX(1.0250);">6/1/2024</span>
<span class="t" style="left:2810px;top:968px;font-size:26px;color:#000;transform:scaleX(0.9900);">6</span>
<span class="t" style="left:98px;top:1024px;font-size:26px;color:#000;transform:scaleX(0.9614);">Government</span>
<span class="t" style="left:285px;top:1024px;font-size:26px;color:#000;transform:scaleX(0.9706);">Mexico</span>
<span class="t" style="left:484px;top:1024px;font-size:26px;color:#000;transform:scaleX(0.9682);">Standard</span>
<span class="t" style="left:649px;top:1024px;font-size:26px;color:#000;transform:scaleX(0.9802);">None</span>
<span class="t" style="left:965px;top:1024px;font-size:26px;color:#000;transform:scaleX(0.9900);">2470</span>
<span class="t" style="left:1248px;top:1024px;font-size:26px;color:#000;transform:scaleX(0.9830);">$5.00</span>
<span class="t" style="left:1412px;top:1024px;font-size:26px;color:#000;transform:scaleX(0.9830);">$15.00</span>
<span class="t" style="left:1584px;top:1024px;font-size:26px;color:#000;transform:scaleX(0.9830);">$37,050.00</span>
<span class="t" style="left:1745px;top:1024px;font-size:26px;color:#000;transform:scaleX(0.9850);">$</span>
<span class="t" style="left:1880px;top:1024px;font-size:26px;color:#000;transform:scaleX(0.9137);">-</span>
<span class="t" style="left:1947px;top:1024px;font-size:26px;color:#000;transform:scaleX(0.9830);">$37,050.00</span>
<span class="t" style="left:2127px;top:1024px;font-size:26px;color:#000;transform:scaleX(0.9830);">$24,700.00</span>
<span class="t" style="left:2307px;top:1024px;font-size:26px;color:#000;transform:scaleX(0.9830);">$12,350.00</span>
<span class="t" style="left:2496px;top:1024px;font-size:26px;color:#000;transform:scaleX(1.0250);">6/1/2024</span>
<span class="t" style="left:2810px;top:1024px;font-size:26px;color:#000;transform:scaleX(0.9900);">6</span>
<span class="t" style="left:98px;top:1080px;font-size:26px;color:#000;transform:scaleX(0.9837);">Education</span>
<span class="t" style="left:286px;top:1080px;font-size:26px;color:#000;transform:scaleX(0.9526);">Canada</span>
<span class="t" style="left:484px;top:1080px;font-size:26px;color:#000;transform:scaleX(0.9682);">Standard</span>
<span class="t" style="left:649px;top:1080px;font-size:26px;color:#000;transform:scaleX(0.9802);">None</span>
<span class="t" style="left:944px;top:1080px;font-size:26px;color:#000;transform:scaleX(0.9900);">2665.5</span>
<span class="t" style="left:1248px;top:1080px;font-size:26px;color:#000;transform:scaleX(0.9830);">$5.00</span>
<span class="t" style="left:1398px;top:1080px;font-size:26px;color:#000;transform:scaleX(0.9830);">$125.00</span>
<span class="t" style="left:1570px;top:1080px;font-size:26px;color:#000;transform:scaleX(0.9830);">$333,187.50</span>
<span class="t" style="left:1745px;top:1080px;font-size:26px;color:#000;transform:scaleX(0.9850);">$</span>
<span class="t" style="left:1880px;top:1080px;font-size:26px;color:#000;transform:scaleX(0.9137);">-</span>
<span class="t" style="left:1932px;top:1080px;font-size:26px;color:#000;transform:scaleX(0.9830);">$333,187.50</span>
<span class="t" style="left:2112px;top:1080px;font-size:26px;color:#000;transform:scaleX(0.9830);">$319,860.00</span>
<span class="t" style="left:2307px;top:1080px;font-size:26px;color:#000;transform:scaleX(0.9830);">$13,327.50</span>
<span class="t" style="left:2496px;top:1080px;font-size:26px;color:#000;transform:scaleX(1.0250);">7/1/2024</span>
<span class="t" style="left:2810px;top:1080px;font-size:26px;color:#000;transform:scaleX(0.9900);">7</span>
<span class="t" style="left:98px;top:1136px;font-size:26px;color:#000;transform:scaleX(0.9714);">Consumer</span>
<span class="t" style="left:285px;top:1136px;font-size:26px;color:#000;transform:scaleX(0.9706);">Mexico</span>
<span class="t" style="left:484px;top:1136px;font-size:26px;color:#000;transform:scaleX(0.9682);">Standard</span>
<span class="t" style="left:649px;top:1136px;font-size:26px;color:#000;transform:scaleX(0.9802);">None</span>
<span class="t" style="left:979px;top:1136px;font-size:26px;color:#000;transform:scaleX(0.9900);">958</span>
<span class="t" style="left:1248px;top:1136px;font-size:26px;color:#000;transform:scaleX(0.9830);">$5.00</span>
<span class="t" style="left:1398px;top:1136px;font-size:26px;color:#000;transform:scaleX(0.9830);">$300.00</span>
<span class="t" style="left:1570px;top:1136px;font-size:26px;color:#000;transform:scaleX(0.9830);">$287,400.00</span>
<span class="t" style="left:1745px;top:1136px;font-size:26px;color:#000;transform:scaleX(0.9850);">$</span>
<span class="t" style="left:1880px;top:1136px;font-size:26px;color:#000;transform:scaleX(0.9137);">-</span>
<span class="t" style="left:1932px;top:1136px;font-size:26px;color:#000;transform:scaleX(0.9830);">$287,400.00</span>
<span class="t" style="left:2112px;top:1136px;font-size:26px;color:#000;transform:scaleX(0.9830);">$239,500.00</span>
<span class="t" style="left:2307px;top:1136px;font-size:26px;color:#000;transform:scaleX(0.9830);">$47,900.00</span>
<span class="t" style="left:2496px;top:1136px;font-size:26px;color:#000;transform:scaleX(1.0250);">8/1/2024</span>
<span class="t" style="left:2810px;top:1136px;font-size:26px;color:#000;transform:scaleX(0.9900);">8</span>
<span class="t" style="left:98px;top:1192px;font-size:26px;color:#000;transform:scaleX(0.9704);">Enterprise</span>
<span class="t" style="left:286px;top:1192px;font-size:26px;color:#000;transform:scaleX(0.9530);">Germany</span>
<span class="t" style="left:484px;top:1192px;font-size:26px;color:#000;transform:scaleX(0.9682);">Standard</span>
<span class="t" style="left:649px;top:1192px;font-size:26px;color:#000;transform:scaleX(0.9802);">None</span>
<span class="t" style="left:965px;top:1192px;font-size:26px;color:#000;transform:scaleX(0.9900);">2146</span>
<span class="t" style="left:1248px;top:1192px;font-size:26px;color:#000;transform:scaleX(0.9830);">$5.00</span>
<span class="t" style="left:1427px;top:1192px;font-size:26px;color:#000;transform:scaleX(0.9830);">$7.00</span>
<span class="t" style="left:1584px;top:1192px;font-size:26px;color:#000;transform:scaleX(0.9830);">$15,022.00</span>
<span class="t" style="left:1745px;top:1192px;font-size:26px;color:#000;transform:scaleX(0.9850);">$</span>
<span class="t" style="left:1880px;top:1192px;font-size:26px;color:#000;transform:scaleX(0.9137);">-</span>
<span class="t" style="left:1947px;top:1192px;font-size:26px;color:#000;transform:scaleX(0.9830);">$15,022.00</span>
<span class="t" style="left:2127px;top:1192px;font-size:26px;color:#000;transform:scaleX(0.9830);">$10,730.00</span>
<span class="t" style="left:2321px;top:1192px;font-size:26px;color:#000;transform:scaleX(0.9830);">$4,292.00</span>
<span class="t" style="left:2496px;top:1192px;font-size:26px;color:#000;transform:scaleX(1.0250);">9/1/2024</span>
<span class="t" style="left:2810px;top:1192px;font-size:26px;color:#000;transform:scaleX(0.9900);">9</span>
<span class="t" style="left:98px;top:1248px;font-size:26px;color:#000;transform:scaleX(0.9837);">Education</span>
<span class="t" style="left:286px;top:1248px;font-size:26px;color:#000;transform:scaleX(0.9526);">Canada</span>
<span class="t" style="left:484px;top:1248px;font-size:26px;color:#000;transform:scaleX(0.9682);">Standard</span>
<span class="t" style="left:649px;top:1248px;font-size:26px;color:#000;transform:scaleX(0.9802);">None</span>
<span class="t" style="left:979px;top:1248px;font-size:26px;color:#000;transform:scaleX(0.9900);">345</span>
<span class="t" style="left:1243px;top:1248px;font-size:26px;color:#000;transform:scaleX(0.9830);">$5.00</span>
<span class="t" style="left:1398px;top:1248px;font-size:26px;color:#000;transform:scaleX(0.9830);">$125.00</span>
<span class="t" style="left:1584px;top:1248px;font-size:26px;color:#000;transform:scaleX(0.9830);">$43,125.00</span>
<span class="t" style="left:1745px;top:1248px;font-size:26px;color:#000;transform:scaleX(0.9850);">$</span>
<span class="t" style="left:1880px;top:1248px;font-size:26px;color:#000;transform:scaleX(0.9137);">-</span>
<span class="t" style="left:1947px;top:1248px;font-size:26px;color:#000;transform:scaleX(0.9830);">$43,125.00</span>
<span class="t" style="left:2127px;top:1248px;font-size:26px;color:#000;transform:scaleX(0.9830);">$41,400.00</span>
<span class="t" style="left:2321px;top:1248px;font-size:26px;color:#000;transform:scaleX(0.9830);">$1,725.00</span>
<span class="t" style="left:2482px;top:1248px;font-size:26px;color:#000;transform:scaleX(1.0250);">10/1/2023</span>
<span class="t" style="left:2795px;top:1248px;font-size:26px;color:#000;transform:scaleX(0.9900);">10</span>
<span class="t" style="left:98px;top:1304px;font-size:26px;color:#000;transform:scaleX(0.9614);">Government</span>
<span class="t" style="left:285px;top:1304px;font-size:26px;color:#000;transform:scaleX(0.9618);">United States</span>
<span class="t" style="left:484px;top:1304px;font-size:26px;color:#000;transform:scaleX(0.9682);">Standard</span>
<span class="t" style="left:649px;top:1304px;font-size:26px;color:#000;transform:scaleX(0.9802);">None</span>
<span class="t" style="left:979px;top:1304px;font-size:26px;color:#000;transform:scaleX(0.9900);">615</span>
<span class="t" style="left:1248px;top:1304px;font-size:26px;color:#000;transform:scaleX(0.9830);">$5.00</span>
<span class="t" style="left:1412px;top:1304px;font-size:26px;color:#000;transform:scaleX(0.9830);">$15.00</span>
<span class="t" style="left:1599px;top:1304px;font-size:26px;color:#000;transform:scaleX(0.9830);">$9,225.00</span>
<span class="t" style="left:1745px;top:1304px;font-size:26px;color:#000;transform:scaleX(0.9850);">$</span>
<span class="t" style="left:1880px;top:1304px;font-size:26px;color:#000;transform:scaleX(0.9137);">-</span>
<span class="t" style="left:1961px;top:1304px;font-size:26px;color:#000;transform:scaleX(0.9830);">$9,225.00</span>
<span class="t" style="left:2141px;top:1304px;font-size:26px;color:#000;transform:scaleX(0.9830);">$6,150.00</span>
<span class="t" style="left:2321px;top:1304px;font-size:26px;color:#000;transform:scaleX(0.9830);">$3,075.00</span>
<span class="t" style="left:2481px;top:1304px;font-size:26px;color:#000;transform:scaleX(1.0250);">12/1/2024</span>
<span class="t" style="left:2796px;top:1304px;font-size:26px;color:#000;transform:scaleX(0.9900);">12</span>
<span class="t" style="left:98px;top:1360px;font-size:26px;color:#000;transform:scaleX(0.9704);">Enterprise</span>
<span class="t" style="left:286px;top:1360px;font-size:26px;color:#000;transform:scaleX(0.9526);">Canada</span>
<span class="t" style="left:483px;top:1360px;font-size:26px;color:#000;transform:scaleX(0.9904);">Premium</span>
<span class="t" style="left:649px;top:1360px;font-size:26px;color:#000;transform:scaleX(0.9802);">None</span>
<span class="t" style="left:980px;top:1360px;font-size:26px;color:#000;transform:scaleX(0.9900);">292</span>
<span class="t" style="left:1234px;top:1360px;font-size:26px;color:#000;transform:scaleX(0.9830);">$10.00</span>
<span class="t" style="left:1412px;top:1360px;font-size:26px;color:#000;transform:scaleX(0.9830);">$20.00</span>
<span class="t" style="left:1599px;top:1360px;font-size:26px;color:#000;transform:scaleX(0.9830);">$5,840.00</span>
<span class="t" style="left:1745px;top:1360px;font-size:26px;color:#000;transform:scaleX(0.9850);">$</span>
<span class="t" style="left:1880px;top:1360px;font-size:26px;color:#000;transform:scaleX(0.9137);">-</span>
<span class="t" style="left:1961px;top:1360px;font-size:26px;color:#000;transform:scaleX(0.9830);">$5,840.00</span>
<span class="t" style="left:2141px;top:1360px;font-size:26px;color:#000;transform:scaleX(0.9830);">$2,920.00</span>
<span class="t" style="left:2321px;top:1360px;font-size:26px;color:#000;transform:scaleX(0.9830);">$2,920.00</span>
<span class="t" style="left:2496px;top:1360px;font-size:26px;color:#000;transform:scaleX(1.0250);">2/1/2024</span>
<span class="t" style="left:2810px;top:1360px;font-size:26px;color:#000;transform:scaleX(0.9900);">2</span>
<span class="t" style="left:98px;top:1416px;font-size:26px;color:#000;transform:scaleX(0.9614);">Government</span>
<span class="t" style="left:285px;top:1416px;font-size:26px;color:#000;transform:scaleX(0.9706);">Mexico</span>
<span class="t" style="left:483px;top:1416px;font-size:26px;color:#000;transform:scaleX(0.9904);">Premium</span>
<span class="t" style="left:649px;top:1416px;font-size:26px;color:#000;transform:scaleX(0.9802);">None</span>
<span class="t" style="left:979px;top:1416px;font-size:26px;color:#000;transform:scaleX(0.9900);">974</span>
<span class="t" style="left:1234px;top:1416px;font-size:26px;color:#000;transform:scaleX(0.9830);">$10.00</span>
<span class="t" style="left:1412px;top:1416px;font-size:26px;color:#000;transform:scaleX(0.9830);">$15.00</span>
<span class="t" style="left:1584px;top:1416px;font-size:26px;color:#000;transform:scaleX(0.9830);">$14,610.00</span>
<span class="t" style="left:1745px;top:1416px;font-size:26px;color:#000;transform:scaleX(0.9850);">$</span>
<span class="t" style="left:1880px;top:1416px;font-size:26px;color:#000;transform:scaleX(0.9137);">-</span>
<span class="t" style="left:1947px;top:1416px;font-size:26px;color:#000;transform:scaleX(0.9830);">$14,610.00</span>
<span class="t" style="left:2141px;top:1416px;font-size:26px;color:#000;transform:scaleX(0.9830);">$9,740.00</span>
<span class="t" style="left:2321px;top:1416px;font-size:26px;color:#000;transform:scaleX(0.9830);">$4,870.00</span>
<span class="t" style="left:2496px;top:1416px;font-size:26px;color:#000;transform:scaleX(1.0250);">2/1/2024</span>
<span class="t" style="left:2810px;top:1416px;font-size:26px;color:#000;transform:scaleX(0.9900);">2</span>
<span class="t" style="left:98px;top:1472px;font-size:26px;color:#000;transform:scaleX(0.8998);">SMB</span>
<span class="t" style="left:286px;top:1472px;font-size:26px;color:#000;transform:scaleX(0.9526);">Canada</span>
<span class="t" style="left:483px;top:1472px;font-size:26px;color:#000;transform:scaleX(0.9904);">Premium</span>
<span class="t" style="left:649px;top:1472px;font-size:26px;color:#000;transform:scaleX(0.9802);">None</span>
<span class="t" style="left:965px;top:1472px;font-size:26px;color:#000;transform:scaleX(0.9900);">2518</span>
<span class="t" style="left:1234px;top:1472px;font-size:26px;color:#000;transform:scaleX(0.9830);">$10.00</span>
<span class="t" style="left:1412px;top:1472px;font-size:26px;color:#000;transform:scaleX(0.9830);">$12.00</span>
<span class="t" style="left:1584px;top:1472px;font-size:26px;color:#000;transform:scaleX(0.9830);">$30,216.00</span>
<span class="t" style="left:1745px;top:1472px;font-size:26px;color:#000;transform:scaleX(0.9850);">$</span>
<span class="t" style="left:1880px;top:1472px;font-size:26px;color:#000;transform:scaleX(0.9137);">-</span>
<span class="t" style="left:1947px;top:1472px;font-size:26px;color:#000;transform:scaleX(0.9830);">$30,216.00</span>
<span class="t" style="left:2141px;top:1472px;font-size:26px;color:#000;transform:scaleX(0.9830);">$7,554.00</span>
<span class="t" style="left:2307px;top:1472px;font-size:26px;color:#000;transform:scaleX(0.9830);">$22,662.00</span>
<span class="t" style="left:2496px;top:1472px;font-size:26px;color:#000;transform:scaleX(1.0250);">6/1/2024</span>
<span class="t" style="left:2810px;top:1472px;font-size:26px;color:#000;transform:scaleX(0.9900);">6</span>
<span class="t" style="left:98px;top:1528px;font-size:26px;color:#000;transform:scaleX(0.9704);">Enterprise</span>
<span class="t" style="left:286px;top:1528px;font-size:26px;color:#000;transform:scaleX(0.9530);">Germany</span>
<span class="t" style="left:483px;top:1528px;font-size:26px;color:#000;transform:scaleX(0.9904);">Premium</span>
<span class="t" style="left:649px;top:1528px;font-size:26px;color:#000;transform:scaleX(0.9802);">None</span>
<span class="t" style="left:965px;top:1528px;font-size:26px;color:#000;transform:scaleX(0.9900);">1006</span>
<span class="t" style="left:1234px;top:1528px;font-size:26px;color:#000;transform:scaleX(0.9830);">$10.00</span>
<span class="t" style="left:1398px;top:1528px;font-size:26px;color:#000;transform:scaleX(0.9830);">$350.00</span>
<span class="t" style="left:1570px;top:1528px;font-size:26px;color:#000;transform:scaleX(0.9830);">$352,100.00</span>
<span class="t" style="left:1745px;top:1528px;font-size:26px;color:#000;transform:scaleX(0.9850);">$</span>
<span class="t" style="left:1880px;top:1528px;font-size:26px;color:#000;transform:scaleX(0.9137);">-</span>
<span class="t" style="left:1932px;top:1528px;font-size:26px;color:#000;transform:scaleX(0.9830);">$352,100.00</span>
<span class="t" style="left:2112px;top:1528px;font-size:26px;color:#000;transform:scaleX(0.9830);">$261,560.00</span>
<span class="t" style="left:2307px;top:1528px;font-size:26px;color:#000;transform:scaleX(0.9830);">$90,540.00</span>
<span class="t" style="left:2496px;top:1528px;font-size:26px;color:#000;transform:scaleX(1.0250);">6/1/2024</span>
<span class="t" style="left:2810px;top:1528px;font-size:26px;color:#000;transform:scaleX(0.9900);">6</span>
<span class="t" style="left:98px;top:1584px;font-size:26px;color:#000;transform:scaleX(0.8998);">SMB</span>
<span class="t" style="left:286px;top:1584px;font-size:26px;color:#000;transform:scaleX(0.9530);">Germany</span>
<span class="t" style="left:483px;top:1584px;font-size:26px;color:#000;transform:scaleX(0.9904);">Premium</span>
<span class="t" style="left:649px;top:1584px;font-size:26px;color:#000;transform:scaleX(0.9802);">None</span>
<span class="t" style="left:980px;top:1584px;font-size:26px;color:#000;transform:scaleX(0.9900);">367</span>
<span class="t" style="left:1234px;top:1584px;font-size:26px;color:#000;transform:scaleX(0.9830);">$10.00</span>
<span class="t" style="left:1412px;top:1584px;font-size:26px;color:#000;transform:scaleX(0.9830);">$12.00</span>
<span class="t" style="left:1599px;top:1584px;font-size:26px;color:#000;transform:scaleX(0.9830);">$4,404.00</span>
<span class="t" style="left:1745px;top:1584px;font-size:26px;color:#000;transform:scaleX(0.9850);">$</span>
<span class="t" style="left:1880px;top:1584px;font-size:26px;color:#000;transform:scaleX(0.9137);">-</span>
<span class="t" style="left:1961px;top:1584px;font-size:26px;color:#000;transform:scaleX(0.9830);">$4,404.00</span>
<span class="t" style="left:2141px;top:1584px;font-size:26px;color:#000;transform:scaleX(0.9830);">$1,101.00</span>
<span class="t" style="left:2321px;top:1584px;font-size:26px;color:#000;transform:scaleX(0.9830);">$3,303.00</span>
<span class="t" style="left:2496px;top:1584px;font-size:26px;color:#000;transform:scaleX(1.0250);">7/1/2024</span>
<span class="t" style="left:2810px;top:1584px;font-size:26px;color:#000;transform:scaleX(0.9900);">7</span>
<span class="t" style="left:98px;top:1640px;font-size:26px;color:#000;transform:scaleX(0.9704);">Enterprise</span>
<span class="t" style="left:285px;top:1640px;font-size:26px;color:#000;transform:scaleX(0.9706);">Mexico</span>
<span class="t" style="left:483px;top:1640px;font-size:26px;color:#000;transform:scaleX(0.9904);">Premium</span>
<span class="t" style="left:649px;top:1640px;font-size:26px;color:#000;transform:scaleX(0.9802);">None</span>
<span class="t" style="left:979px;top:1640px;font-size:26px;color:#000;transform:scaleX(0.9900);">883</span>
<span class="t" style="left:1234px;top:1640px;font-size:26px;color:#000;transform:scaleX(0.9830);">$10.00</span>
<span class="t" style="left:1427px;top:1640px;font-size:26px;color:#000;transform:scaleX(0.9830);">$7.00</span>
<span class="t" style="left:1599px;top:1640px;font-size:26px;color:#000;transform:scaleX(0.9830);">$6,181.00</span>
<span class="t" style="left:1745px;top:1640px;font-size:26px;color:#000;transform:scaleX(0.9850);">$</span>
<span class="t" style="left:1880px;top:1640px;font-size:26px;color:#000;transform:scaleX(0.9137);">-</span>
<span class="t" style="left:1961px;top:1640px;font-size:26px;color:#000;transform:scaleX(0.9830);">$6,181.00</span>
<span class="t" style="left:2141px;top:1640px;font-size:26px;color:#000;transform:scaleX(0.9830);">$4,415.00</span>
<span class="t" style="left:2321px;top:1640px;font-size:26px;color:#000;transform:scaleX(0.9830);">$1,766.00</span>
<span class="t" style="left:2496px;top:1640px;font-size:26px;color:#000;transform:scaleX(1.0250);">8/1/2024</span>
<span class="t" style="left:2810px;top:1640px;font-size:26px;color:#000;transform:scaleX(0.9900);">8</span>
<span class="t" style="left:98px;top:1696px;font-size:26px;color:#000;transform:scaleX(0.9614);">Government</span>
<span class="t" style="left:285px;top:1696px;font-size:26px;color:#000;transform:scaleX(0.9506);">France</span>
<span class="t" style="left:483px;top:1696px;font-size:26px;color:#000;transform:scaleX(0.9904);">Premium</span>
<span class="t" style="left:649px;top:1696px;font-size:26px;color:#000;transform:scaleX(0.9802);">None</span>
<span class="t" style="left:980px;top:1696px;font-size:26px;color:#000;transform:scaleX(0.9900);">549</span>
<span class="t" style="left:1234px;top:1696px;font-size:26px;color:#000;transform:scaleX(0.9830);">$10.00</span>
<span class="t" style="left:1412px;top:1696px;font-size:26px;color:#000;transform:scaleX(0.9830);">$15.00</span>
<span class="t" style="left:1599px;top:1696px;font-size:26px;color:#000;transform:scaleX(0.9830);">$8,235.00</span>
<span class="t" style="left:1745px;top:1696px;font-size:26px;color:#000;transform:scaleX(0.9850);">$</span>
<span class="t" style="left:1880px;top:1696px;font-size:26px;color:#000;transform:scaleX(0.9137);">-</span>
<span class="t" style="left:1961px;top:1696px;font-size:26px;color:#000;transform:scaleX(0.9830);">$8,235.00</span>
<span class="t" style="left:2141px;top:1696px;font-size:26px;color:#000;transform:scaleX(0.9830);">$5,490.00</span>
<span class="t" style="left:2321px;top:1696px;font-size:26px;color:#000;transform:scaleX(0.9830);">$2,745.00</span>
<span class="t" style="left:2496px;top:1696px;font-size:26px;color:#000;transform:scaleX(1.0250);">9/1/2023</span>
<span class="t" style="left:2810px;top:1696px;font-size:26px;color:#000;transform:scaleX(0.9900);">9</span>
<span class="t" style="left:98px;top:1752px;font-size:26px;color:#000;transform:scaleX(0.9714);">Consumer</span>
<span class="t" style="left:285px;top:1752px;font-size:26px;color:#000;transform:scaleX(0.9706);">Mexico</span>
<span class="t" style="left:483px;top:1752px;font-size:26px;color:#000;transform:scaleX(0.9904);">Premium</span>
<span class="t" style="left:649px;top:1752px;font-size:26px;color:#000;transform:scaleX(0.9802);">None</span>
<span class="t" style="left:979px;top:1752px;font-size:26px;color:#000;transform:scaleX(0.9900);">788</span>
<span class="t" style="left:1234px;top:1752px;font-size:26px;color:#000;transform:scaleX(0.9830);">$10.00</span>
<span class="t" style="left:1398px;top:1752px;font-size:26px;color:#000;transform:scaleX(0.9830);">$300.00</span>
<span class="t" style="left:1570px;top:1752px;font-size:26px;color:#000;transform:scaleX(0.9830);">$236,400.00</span>
<span class="t" style="left:1745px;top:1752px;font-size:26px;color:#000;transform:scaleX(0.9850);">$</span>
<span class="t" style="left:1880px;top:1752px;font-size:26px;color:#000;transform:scaleX(0.9137);">-</span>
<span class="t" style="left:1932px;top:1752px;font-size:26px;color:#000;transform:scaleX(0.9830);">$236,400.00</span>
<span class="t" style="left:2112px;top:1752px;font-size:26px;color:#000;transform:scaleX(0.9830);">$197,000.00</span>
<span class="t" style="left:2307px;top:1752px;font-size:26px;color:#000;transform:scaleX(0.9830);">$39,400.00</span>
<span class="t" style="left:2496px;top:1752px;font-size:26px;color:#000;transform:scaleX(1.0250);">9/1/2023</span>
<span class="t" style="left:2810px;top:1752px;font-size:26px;color:#000;transform:scaleX(0.9900);">9</span>
<span class="t" style="left:98px;top:1808px;font-size:26px;color:#000;transform:scaleX(0.9614);">Government</span>
<span class="t" style="left:285px;top:1808px;font-size:26px;color:#000;transform:scaleX(0.9706);">Mexico</span>
<span class="t" style="left:483px;top:1808px;font-size:26px;color:#000;transform:scaleX(0.9904);">Premium</span>
<span class="t" style="left:649px;top:1808px;font-size:26px;color:#000;transform:scaleX(0.9802);">None</span>
<span class="t" style="left:965px;top:1808px;font-size:26px;color:#000;transform:scaleX(0.9900);">2472</span>
<span class="t" style="left:1234px;top:1808px;font-size:26px;color:#000;transform:scaleX(0.9830);">$10.00</span>
<span class="t" style="left:1412px;top:1808px;font-size:26px;color:#000;transform:scaleX(0.9830);">$15.00</span>
<span class="t" style="left:1584px;top:1808px;font-size:26px;color:#000;transform:scaleX(0.9830);">$37,080.00</span>
<span class="t" style="left:1745px;top:1808px;font-size:26px;color:#000;transform:scaleX(0.9850);">$</span>
<span class="t" style="left:1880px;top:1808px;font-size:26px;color:#000;transform:scaleX(0.9137);">-</span>
<span class="t" style="left:1947px;top:1808px;font-size:26px;color:#000;transform:scaleX(0.9830);">$37,080.00</span>
<span class="t" style="left:2127px;top:1808px;font-size:26px;color:#000;transform:scaleX(0.9830);">$24,720.00</span>
<span class="t" style="left:2307px;top:1808px;font-size:26px;color:#000;transform:scaleX(0.9830);">$12,360.00</span>
<span class="t" style="left:2496px;top:1808px;font-size:26px;color:#000;transform:scaleX(1.0250);">9/1/2024</span>
<span class="t" style="left:2810px;top:1808px;font-size:26px;color:#000;transform:scaleX(0.9900);">9</span>
<span class="t" style="left:98px;top:1864px;font-size:26px;color:#000;transform:scaleX(0.9704);">Enterprise</span>
<span class="t" style="left:285px;top:1864px;font-size:26px;color:#000;transform:scaleX(0.9618);">United States</span>
<span class="t" style="left:483px;top:1864px;font-size:26px;color:#000;transform:scaleX(0.9904);">Premium</span>
<span class="t" style="left:649px;top:1864px;font-size:26px;color:#000;transform:scaleX(0.9802);">None</span>
<span class="t" style="left:965px;top:1864px;font-size:26px;color:#000;transform:scaleX(0.9900);">1143</span>
<span class="t" style="left:1234px;top:1864px;font-size:26px;color:#000;transform:scaleX(0.9830);">$10.00</span>
<span class="t" style="left:1427px;top:1864px;font-size:26px;color:#000;transform:scaleX(0.9830);">$7.00</span>
<span class="t" style="left:1599px;top:1864px;font-size:26px;color:#000;transform:scaleX(0.9830);">$8,001.00</span>
<span class="t" style="left:1745px;top:1864px;font-size:26px;color:#000;transform:scaleX(0.9850);">$</span>
<span class="t" style="left:1880px;top:1864px;font-size:26px;color:#000;transform:scaleX(0.9137);">-</span>
<span class="t" style="left:1961px;top:1864px;font-size:26px;color:#000;transform:scaleX(0.9830);">$8,001.00</span>
<span class="t" style="left:2141px;top:1864px;font-size:26px;color:#000;transform:scaleX(0.9830);">$5,715.00</span>
<span class="t" style="left:2321px;top:1864px;font-size:26px;color:#000;transform:scaleX(0.9830);">$2,286.00</span>
<span class="t" style="left:2481px;top:1864px;font-size:26px;color:#000;transform:scaleX(1.0250);">10/1/2024</span>
<span class="t" style="left:2795px;top:1864px;font-size:26px;color:#000;transform:scaleX(0.9900);">10</span>
<span class="t" style="left:98px;top:1920px;font-size:26px;color:#000;transform:scaleX(0.9704);">Enterprise</span>
<span class="t" style="left:286px;top:1920px;font-size:26px;color:#000;transform:scaleX(0.9526);">Canada</span>
<span class="t" style="left:483px;top:1920px;font-size:26px;color:#000;transform:scaleX(0.9904);">Premium</span>
<span class="t" style="left:649px;top:1920px;font-size:26px;color:#000;transform:scaleX(0.9802);">None</span>
<span class="t" style="left:965px;top:1920px;font-size:26px;color:#000;transform:scaleX(0.9900);">1725</span>
<span class="t" style="left:1234px;top:1920px;font-size:26px;color:#000;transform:scaleX(0.9830);">$10.00</span>
<span class="t" style="left:1398px;top:1920px;font-size:26px;color:#000;transform:scaleX(0.9830);">$350.00</span>
<span class="t" style="left:1570px;top:1920px;font-size:26px;color:#000;transform:scaleX(0.9830);">$603,750.00</span>
<span class="t" style="left:1745px;top:1920px;font-size:26px;color:#000;transform:scaleX(0.9850);">$</span>
<span class="t" style="left:1880px;top:1920px;font-size:26px;color:#000;transform:scaleX(0.9137);">-</span>
<span class="t" style="left:1932px;top:1920px;font-size:26px;color:#000;transform:scaleX(0.9830);">$603,750.00</span>
<span class="t" style="left:2112px;top:1920px;font-size:26px;color:#000;transform:scaleX(0.9830);">$448,500.00</span>
<span class="t" style="left:2297px;top:1920px;font-size:26px;color:#000;transform:scaleX(0.9830);">$155,250.00</span>
<span class="t" style="left:2482px;top:1920px;font-size:26px;color:#000;transform:scaleX(1.0250);">11/1/2023</span>
<span class="t" style="left:2796px;top:1920px;font-size:26px;color:#000;transform:scaleX(0.9900);">11</span>
<span class="t" style="left:98px;top:1976px;font-size:26px;color:#000;transform:scaleX(0.8998);">SMB</span>
<span class="t" style="left:285px;top:1976px;font-size:26px;color:#000;transform:scaleX(0.9618);">United States</span>
<span class="t" style="left:483px;top:1976px;font-size:26px;color:#000;transform:scaleX(0.9904);">Premium</span>
<span class="t" style="left:649px;top:1976px;font-size:26px;color:#000;transform:scaleX(0.9802);">None</span>
<span class="t" style="left:980px;top:1976px;font-size:26px;color:#000;transform:scaleX(0.9900);">912</span>
<span class="t" style="left:1234px;top:1976px;font-size:26px;color:#000;transform:scaleX(0.9830);">$10.00</span>
<span class="t" style="left:1417px;top:1976px;font-size:26px;color:#000;transform:scaleX(0.9830);">$12.00</span>
<span class="t" style="left:1589px;top:1976px;font-size:26px;color:#000;transform:scaleX(0.9830);">$10,944.00</span>
<span class="t" style="left:1745px;top:1976px;font-size:26px;color:#000;transform:scaleX(0.9850);">$</span>
<span class="t" style="left:1880px;top:1976px;font-size:26px;color:#000;transform:scaleX(0.9137);">-</span>
<span class="t" style="left:1952px;top:1976px;font-size:26px;color:#000;transform:scaleX(0.9830);">$10,944.00</span>
<span class="t" style="left:2146px;top:1976px;font-size:26px;color:#000;transform:scaleX(0.9830);">$2,736.00</span>
<span class="t" style="left:2326px;top:1976px;font-size:26px;color:#000;transform:scaleX(0.9830);">$8,208.00</span>
<span class="t" style="left:2482px;top:1976px;font-size:26px;color:#000;transform:scaleX(1.0250);">11/1/2023</span>
<span class="t" style="left:2796px;top:1976px;font-size:26px;color:#000;transform:scaleX(0.9900);">11</span>
</div>
<div class="a" style="left:16px;top:2033px;width:2805px;height:64px;background:#f5f5f5;"></div>
<div class="a" style="left:16px;top:2033px;width:2805px;height:1.5px;background:#dcdcdc;"></div>
<div class="a" style="left:16px;top:2096.2px;width:3808px;height:2px;background:#cacaca;"></div>
<div class="a" style="left:208px;top:2033px;width:162px;height:55px;background:#fff;border-radius:0 0 9px 9px;box-shadow:0 1px 3px rgba(0,0,0,.18);"></div>
<div class="a" style="left:224px;top:2084px;width:130px;height:3.6px;background:#107c41;border-radius:2px;"></div>
<span class="t" style="left:224px;top:2046px;font-size:28px;color:#2b2b2b;font-weight:700;transform:scaleX(0.9152);">Sales data</span>
<span class="t" style="left:386px;top:2046px;font-size:28px;color:#4c4c4c;transform:scaleX(0.9934);">Dashboard</span>
<span class="t" style="left:31px;top:2108px;font-size:24.5px;color:#696969;transform:scaleX(0.9863);">Calculation Mode: Automatic</span>
<span class="t" style="left:372px;top:2108px;font-size:24.5px;color:#696969;transform:scaleX(0.9681);">Workbook Statistics</span>
<span class="t" style="left:3314px;top:2108px;font-size:24.5px;color:#696969;transform:scaleX(0.9690);">Give Feedback to Microsoft</span>
<span class="t" style="left:3692px;top:2108px;font-size:24.5px;color:#696969;transform:scaleX(0.9262);">100%</span>
<svg class="a" style="left:0;top:0;" width="3840" height="2160" viewBox="0 0 3840 2160"><polyline points="52.8,2055.2 42.8,2064.6 52.8,2074" fill="none" stroke="#333" stroke-width="2.1" stroke-linecap="round" stroke-linejoin="round"/><polyline points="99.6,2055.2 109.6,2064.6 99.6,2074" fill="none" stroke="#333" stroke-width="2.1" stroke-linecap="round" stroke-linejoin="round"/><path d="M148 2055.6 H172 M148 2063.6 H172 M148 2071.8 H172" stroke="#333" stroke-width="2"/><path d="M552.4 2059.6 H569.6 M561 2051 V2068.2" stroke="#424242" stroke-width="2"/><polyline points="3263,2116.6 3271.2,2125 3279.4,2116.6" fill="none" stroke="#424242" stroke-width="2" stroke-linecap="round" stroke-linejoin="round"/><path d="M3636 2118.8 H3658" stroke="#333" stroke-width="2"/><path d="M3784 2118.8 H3806 M3795 2107.8 V2129.8" stroke="#333" stroke-width="2"/></svg>
<div class="a" style="left:2821px;top:348px;width:1003px;height:1749px;background:#fafafa;background:linear-gradient(#f5f5f5,#fafafa 6px);"></div>
<div class="a" style="left:2820px;top:352px;width:2px;height:1745px;background:#d2d2d2;"></div>
<span class="t" style="left:2853px;top:402px;font-size:31px;color:#2b2b2b;font-weight:700;transform:scaleX(0.9103);">Excel Labs</span>
<div class="a" style="left:3720px;top:508px;width:64px;height:64px;background:#107c41;border-radius:13px;"></div>
<span class="t" style="left:3289px;top:615px;font-size:24.5px;color:#777777;transform:scaleX(0.9186);">Today</span>
<div class="a" style="left:2949px;top:695px;width:811px;height:154px;background:#f5f5f5;border-radius:16px;"></div>
<span class="t" style="left:2979px;top:721px;font-size:28px;color:#4c4c4c;transform:scaleX(0.9930);">Run a full analysis on this dataset. I want to understand</span>
<span class="t" style="left:2981px;top:761px;font-size:28px;color:#4c4c4c;transform:scaleX(1.0057);">some important insights to help me make decisions about</span>
<span class="t" style="left:2980px;top:801px;font-size:28px;color:#4c4c4c;transform:scaleX(0.9830);">my business. Make it visual!</span>
<span class="t" style="left:2948px;top:893px;font-size:28px;color:#484848;font-weight:700;transform:scaleX(0.9792);">Agent mode</span>
<span class="t" style="left:2884px;top:959px;font-size:28px;color:#4c4c4c;">OK, I’ll start working on your request.</span>
<span class="t" style="left:2884px;top:1015px;font-size:28px;color:#777777;transform:scaleX(1.0108);">Editing file</span>
<div class="a" style="left:2884.5px;top:1077px;width:874.5px;height:461.5px;background:#fafafa;border:1.5px solid #e3e3e3;border-radius:26px;box-sizing:border-box;box-shadow:0 1px 2px rgba(0,0,0,.04);"></div>
<span class="t" style="left:2980px;top:1121px;font-size:28px;color:#4c4c4c;transform:scaleX(0.9650);">Planning analysis and visuals</span>
<span class="t" style="left:2980px;top:1193px;font-size:28px;color:#4c4c4c;transform:scaleX(0.9929);">Designing step-by-step analysis</span>
<span class="t" style="left:2980px;top:1265px;font-size:28px;color:#4c4c4c;transform:scaleX(1.0033);">Building pivots and charts</span>
<span class="t" style="left:2978px;top:1315px;font-size:28px;color:#696969;transform:scaleX(1.0246);">I'm outlining steps for pivot tables in the</span>
<span class="t" style="left:2981px;top:1355px;font-size:28px;color:#696969;transform:scaleX(0.9925);">'Dashboard': monthly trends, product sales, segment</span>
<span class="t" style="left:2980px;top:1395px;font-size:28px;color:#696969;transform:scaleX(0.9872);">sales, country rankings, discount bands. I'm also planning</span>
<span class="t" style="left:2980px;top:1435px;font-size:28px;color:#696969;transform:scaleX(1.0141);">charts and applying conditional formatting. Verification</span>
<span class="t" style="left:2981px;top:1475px;font-size:28px;color:#696969;transform:scaleX(0.9872);">follows each step.</span>
<div class="a" style="left:2853px;top:1805px;width:938px;height:153.5px;background:#fff;border-radius:30px;box-shadow:0 1.5px 0 0 #707070,0 12px 24px rgba(0,0,0,.13),0 2px 6px rgba(0,0,0,.08),0 0 2px rgba(0,0,0,.28);"></div>
<div class="a" style="left:2884px;top:1820.5px;width:1.8px;height:38.5px;background:#242424;"></div>
<span class="t" style="left:2885px;top:1829px;font-size:28px;color:#777777;transform:scaleX(1.0065);">Describe what you’d like to create or edit</span>
<div class="a" style="left:3708px;top:1880px;width:64px;height:64px;background:#c9ead8;border-radius:50%;"></div>
<div class="a" style="left:3728px;top:1900.4px;width:24px;height:23.2px;background:#0f7b3b;border-radius:3px;"></div>
<span class="t" style="left:3117px;top:1980px;font-size:24.5px;color:#696969;transform:scaleX(0.9851);">AI-generated content may be incorrect</span>
<svg class="a" style="left:0;top:0;" width="3840" height="2160" viewBox="0 0 3840 2160"><circle cx="3685.8" cy="416.2" r="2.5" fill="#424242"/><circle cx="3696.1" cy="416.2" r="2.5" fill="#424242"/><circle cx="3706.3" cy="416.2" r="2.5" fill="#424242"/><path d="M3749.4 405.4 L3771.2 427.2 M3771.2 405.4 L3749.4 427.2" stroke="#3a3a3a" stroke-width="2" stroke-linecap="round"/><path d="M2880.4 530.6 H2904 M2880.4 538.8 H2904 M2880.4 547 H2904" stroke="#242424" stroke-width="2"/><path d="M3752.6 527 H3743 Q3739 527 3739 531 V548.8 Q3739 552.8 3743 552.8 H3761 Q3765 552.8 3765 548.8 V537.6" fill="none" stroke="#e9fff2" stroke-width="2" stroke-linecap="round"/><path d="M3750.6 541.2 L3767.6 524.6" stroke="#e9fff2" stroke-width="2" stroke-linecap="round"/><defs><linearGradient id="agi" x1="0" y1="0" x2="1" y2="1"><stop offset="0" stop-color="#31b06c"/><stop offset="1" stop-color="#1c8a7a"/></linearGradient></defs><rect x="2891" y="887" width="34" height="34" rx="5.5" fill="url(#agi)"/><path d="M2902 887 V921 M2913.6 887 V921 M2891 898.2 H2925 M2891 909.6 H2925" stroke="#98f2a6" stroke-width="1.5"/><polyline points="3031,1034.6 3040,1025 3049,1034.6" fill="none" stroke="#616161" stroke-width="2" stroke-linecap="round" stroke-linejoin="round"/><polyline points="2926.2,1137.4 2934.6,1145.8 2954.4,1125.4" fill="none" stroke="#616161" stroke-width="2" stroke-linecap="round" stroke-linejoin="round"/><polyline points="2926.2,1209.2 2934.6,1217.6 2954.4,1197.2" fill="none" stroke="#616161" stroke-width="2" stroke-linecap="round" stroke-linejoin="round"/><polyline points="3697,1128 3705,1136 3697,1144" fill="none" stroke="#616161" stroke-width="2" stroke-linecap="round" stroke-linejoin="round"/><polyline points="3697,1199.8 3705,1207.8 3697,1215.8" fill="none" stroke="#616161" stroke-width="2" stroke-linecap="round" stroke-linejoin="round"/><polyline points="3691.8,1277.2 3699.6,1285.2 3707.4,1277.2" fill="none" stroke="#616161" stroke-width="2" stroke-linecap="round" stroke-linejoin="round"/><ellipse cx="2918.6" cy="1280" rx="5.6" ry="4.2" fill="#3f8fc4"/><ellipse cx="2936.2" cy="1280" rx="5.2" ry="4.2" fill="#4aa08a"/><rect x="2948" y="1275.8" width="16.4" height="8.4" rx="4.2" fill="#9bb84a"/><path d="M2889.4 1911.6 H2918.6 M2904 1897 V1926.2" stroke="#242424" stroke-width="2" stroke-linecap="round"/></svg>
</div>
</body></html>
